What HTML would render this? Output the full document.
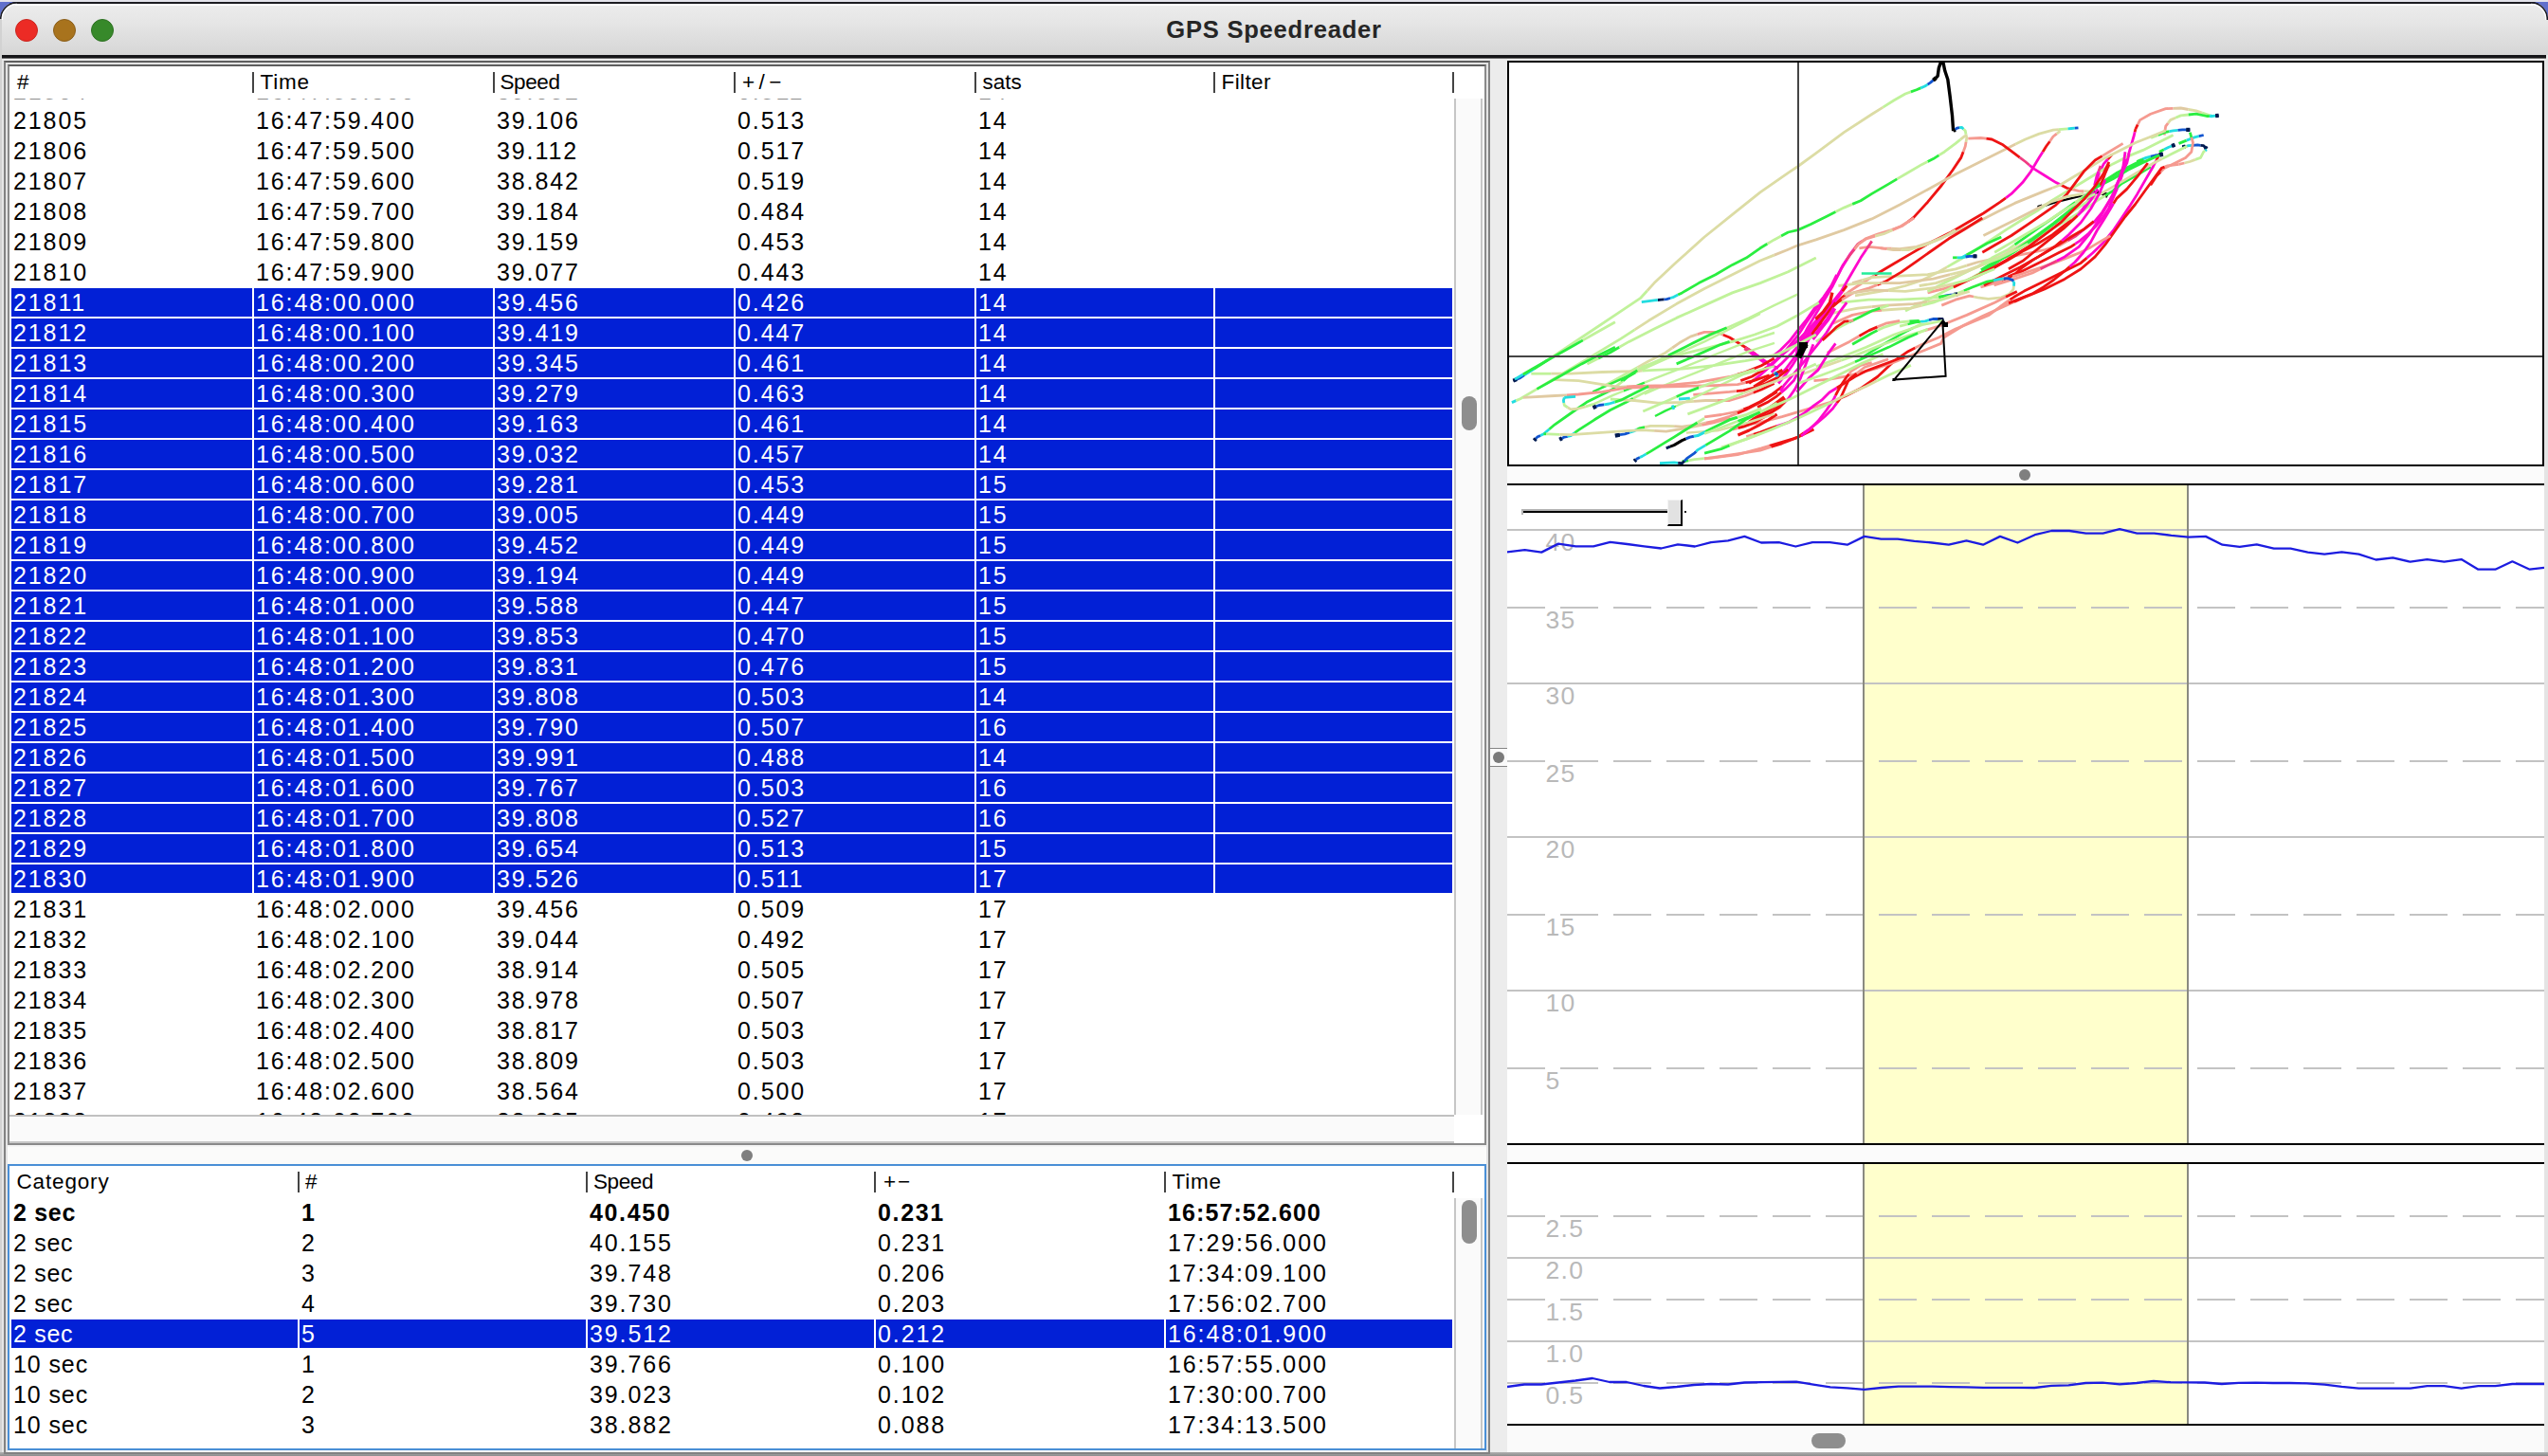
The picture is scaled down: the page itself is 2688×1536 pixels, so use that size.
<!DOCTYPE html><html><head><meta charset="utf-8"><title>GPS Speedreader</title><style>
*{box-sizing:border-box;margin:0;padding:0}
html,body{width:2688px;height:1536px;overflow:hidden;background:#ececec;font-family:"Liberation Sans",sans-serif;}
.a{position:absolute}
#tb{left:0;top:4px;width:2688px;height:54px;background:linear-gradient(#ececec 0%,#e6e6e6 35%,#d6d6d6 100%);}
.tl{position:absolute;top:20px;width:24px;height:24px;border-radius:50%;}
#title{position:absolute;left:0;width:2688px;top:15px;text-align:center;font-weight:bold;font-size:25.6px;line-height:32px;color:#262626;letter-spacing:0.75px}
.cell{position:absolute;height:30px;line-height:30px;font-size:25px;letter-spacing:1.9px;white-space:pre;color:#000;top:0}
.row{position:absolute;left:12px;width:1520px;height:30px}
.row.s{background:#0220d6}
.row.s .cell{color:#fff}
.row.b .cell{font-weight:bold;letter-spacing:1.65px}
.row.b .cell.k0{letter-spacing:0.7px}
.row.b .cell.k4{letter-spacing:1.1px}
.cell.t2{letter-spacing:0.7px}
.cell.t10{letter-spacing:0.9px}
.vs{position:absolute;width:2px;background:#fff}
.hd{position:absolute;height:34px;line-height:34px;font-size:22.5px;white-space:pre;color:#000}
.hs{position:absolute;width:2px;height:22px;background:#444}
.lab{position:absolute;font-size:26.5px;line-height:26px;letter-spacing:1.3px;color:#b9b9b9;white-space:pre}
</style></head><body>
<div class="a" style="left:0;top:0;width:2688px;height:2px;background:#e3e3eb"></div>
<div class="a" style="left:0;top:2px;width:2688px;height:2px;background:#1b1b20"></div>
<div class="a" id="tb"></div>
<div class="a" style="left:16px;top:4px;width:2656px;height:1.5px;background:#fff"></div>
<svg class="a" style="left:0;top:0" width="24" height="24"><path d="M0 2H18A18 18 0 0 0 0 20Z" fill="#6070cc"/><path d="M0.8 21A17.2 17.2 0 0 1 18 2.9" fill="none" stroke="#1b1b24" stroke-width="1.7"/><path d="M2.4 21A15.6 15.6 0 0 1 18 4.5" fill="none" stroke="#fff" stroke-width="1.3"/></svg>
<svg class="a" style="left:2664px;top:0" width="24" height="24"><path d="M24 2H6A18 18 0 0 1 24 20Z" fill="#6070cc"/><path d="M23.2 21A17.2 17.2 0 0 0 6 2.9" fill="none" stroke="#1b1b24" stroke-width="1.7"/><path d="M21.6 21A15.6 15.6 0 0 0 6 4.5" fill="none" stroke="#fff" stroke-width="1.3"/></svg>
<div class="tl" style="left:16px;background:#ec2b25;border:1.5px solid #c9261f"></div>
<div class="tl" style="left:56px;background:#a8731d;border:1.5px solid #8a5e1a"></div>
<div class="tl" style="left:96px;background:#37892a;border:1.5px solid #2d7022"></div>
<div id="title">GPS Speedreader</div>
<div class="a" style="left:2px;top:58px;width:2684px;height:3px;background:#151518"></div>
<div class="a" style="left:2px;top:61px;width:2684px;height:1px;background:#6a6a6a"></div>
<div class="a" style="left:0;top:62px;width:2688px;height:1474px;background:#ececec"></div>
<div class="a" style="left:0;top:20px;width:2px;height:1516px;background:#d2d2d2"></div>
<div class="a" style="left:2px;top:62px;width:2px;height:1474px;background:#e6e6e6"></div>
<div class="a" style="left:2684px;top:62px;width:4px;height:1474px;background:#e4e4e4"></div>
<div class="a" style="left:0;top:1532px;width:2688px;height:4px;background:linear-gradient(#b0b0b0,#8c8c8c)"></div>
<div class="a" style="left:4px;top:64px;width:1568px;height:1470px;border:2px solid #828282;border-top-color:#5e5e5e;background:#f4f4f4"></div>
<div class="a" style="left:6px;top:66px;width:1564px;height:1466px;border:2px solid #e4e4e4;border-bottom:none"></div>
<div class="a" style="left:8px;top:68px;width:1560px;height:1140px;border:2px solid #8a8a8a;border-top-color:#5e5e5e;background:#fff"></div>
<div class="hd" style="left:18px;top:70px;letter-spacing:1.0px">#</div>
<div class="hd" style="left:274.5px;top:70px;letter-spacing:0.75px">Time</div>
<div class="hd" style="left:527.5px;top:70px;letter-spacing:-0.4px">Speed</div>
<div class="hd" style="left:783px;top:70px;letter-spacing:4.4px">+/−</div>
<div class="hd" style="left:1036.5px;top:70px;letter-spacing:0px">sats</div>
<div class="hd" style="left:1288.5px;top:70px;letter-spacing:0.4px">Filter</div>
<div class="hs" style="left:266px;top:76px"></div>
<div class="hs" style="left:520px;top:76px"></div>
<div class="hs" style="left:774px;top:76px"></div>
<div class="hs" style="left:1028px;top:76px"></div>
<div class="hs" style="left:1280px;top:76px"></div>
<div class="hs" style="left:1532px;top:76px"></div>
<div class="a" style="left:0;top:104px;width:1534px;height:1072px;overflow:hidden">
<div class="row" style="top:-23px;opacity:.45">
<div class="cell" style="left:2px">21804</div>
<div class="cell" style="left:258px">16:47:59.300</div>
<div class="cell" style="left:512px">39.082</div>
<div class="cell" style="left:766px">0.511</div>
<div class="cell" style="left:1020px">14</div>
</div>
<div class="row" style="top:8px">
<div class="cell" style="left:2px">21805</div>
<div class="cell" style="left:258px">16:47:59.400</div>
<div class="cell" style="left:512px">39.106</div>
<div class="cell" style="left:766px">0.513</div>
<div class="cell" style="left:1020px">14</div>
</div>
<div class="row" style="top:40px">
<div class="cell" style="left:2px">21806</div>
<div class="cell" style="left:258px">16:47:59.500</div>
<div class="cell" style="left:512px">39.112</div>
<div class="cell" style="left:766px">0.517</div>
<div class="cell" style="left:1020px">14</div>
</div>
<div class="row" style="top:72px">
<div class="cell" style="left:2px">21807</div>
<div class="cell" style="left:258px">16:47:59.600</div>
<div class="cell" style="left:512px">38.842</div>
<div class="cell" style="left:766px">0.519</div>
<div class="cell" style="left:1020px">14</div>
</div>
<div class="row" style="top:104px">
<div class="cell" style="left:2px">21808</div>
<div class="cell" style="left:258px">16:47:59.700</div>
<div class="cell" style="left:512px">39.184</div>
<div class="cell" style="left:766px">0.484</div>
<div class="cell" style="left:1020px">14</div>
</div>
<div class="row" style="top:136px">
<div class="cell" style="left:2px">21809</div>
<div class="cell" style="left:258px">16:47:59.800</div>
<div class="cell" style="left:512px">39.159</div>
<div class="cell" style="left:766px">0.453</div>
<div class="cell" style="left:1020px">14</div>
</div>
<div class="row" style="top:168px">
<div class="cell" style="left:2px">21810</div>
<div class="cell" style="left:258px">16:47:59.900</div>
<div class="cell" style="left:512px">39.077</div>
<div class="cell" style="left:766px">0.443</div>
<div class="cell" style="left:1020px">14</div>
</div>
<div class="row s" style="top:200px">
<div class="cell" style="left:2px">21811</div>
<div class="cell" style="left:258px">16:48:00.000</div>
<div class="cell" style="left:512px">39.456</div>
<div class="cell" style="left:766px">0.426</div>
<div class="cell" style="left:1020px">14</div>
<div class="vs" style="left:254px;top:0;height:32px"></div>
<div class="vs" style="left:508px;top:0;height:32px"></div>
<div class="vs" style="left:762px;top:0;height:32px"></div>
<div class="vs" style="left:1016px;top:0;height:32px"></div>
<div class="vs" style="left:1268px;top:0;height:32px"></div>
</div>
<div class="row s" style="top:232px">
<div class="cell" style="left:2px">21812</div>
<div class="cell" style="left:258px">16:48:00.100</div>
<div class="cell" style="left:512px">39.419</div>
<div class="cell" style="left:766px">0.447</div>
<div class="cell" style="left:1020px">14</div>
<div class="vs" style="left:254px;top:0;height:32px"></div>
<div class="vs" style="left:508px;top:0;height:32px"></div>
<div class="vs" style="left:762px;top:0;height:32px"></div>
<div class="vs" style="left:1016px;top:0;height:32px"></div>
<div class="vs" style="left:1268px;top:0;height:32px"></div>
</div>
<div class="row s" style="top:264px">
<div class="cell" style="left:2px">21813</div>
<div class="cell" style="left:258px">16:48:00.200</div>
<div class="cell" style="left:512px">39.345</div>
<div class="cell" style="left:766px">0.461</div>
<div class="cell" style="left:1020px">14</div>
<div class="vs" style="left:254px;top:0;height:32px"></div>
<div class="vs" style="left:508px;top:0;height:32px"></div>
<div class="vs" style="left:762px;top:0;height:32px"></div>
<div class="vs" style="left:1016px;top:0;height:32px"></div>
<div class="vs" style="left:1268px;top:0;height:32px"></div>
</div>
<div class="row s" style="top:296px">
<div class="cell" style="left:2px">21814</div>
<div class="cell" style="left:258px">16:48:00.300</div>
<div class="cell" style="left:512px">39.279</div>
<div class="cell" style="left:766px">0.463</div>
<div class="cell" style="left:1020px">14</div>
<div class="vs" style="left:254px;top:0;height:32px"></div>
<div class="vs" style="left:508px;top:0;height:32px"></div>
<div class="vs" style="left:762px;top:0;height:32px"></div>
<div class="vs" style="left:1016px;top:0;height:32px"></div>
<div class="vs" style="left:1268px;top:0;height:32px"></div>
</div>
<div class="row s" style="top:328px">
<div class="cell" style="left:2px">21815</div>
<div class="cell" style="left:258px">16:48:00.400</div>
<div class="cell" style="left:512px">39.163</div>
<div class="cell" style="left:766px">0.461</div>
<div class="cell" style="left:1020px">14</div>
<div class="vs" style="left:254px;top:0;height:32px"></div>
<div class="vs" style="left:508px;top:0;height:32px"></div>
<div class="vs" style="left:762px;top:0;height:32px"></div>
<div class="vs" style="left:1016px;top:0;height:32px"></div>
<div class="vs" style="left:1268px;top:0;height:32px"></div>
</div>
<div class="row s" style="top:360px">
<div class="cell" style="left:2px">21816</div>
<div class="cell" style="left:258px">16:48:00.500</div>
<div class="cell" style="left:512px">39.032</div>
<div class="cell" style="left:766px">0.457</div>
<div class="cell" style="left:1020px">14</div>
<div class="vs" style="left:254px;top:0;height:32px"></div>
<div class="vs" style="left:508px;top:0;height:32px"></div>
<div class="vs" style="left:762px;top:0;height:32px"></div>
<div class="vs" style="left:1016px;top:0;height:32px"></div>
<div class="vs" style="left:1268px;top:0;height:32px"></div>
</div>
<div class="row s" style="top:392px">
<div class="cell" style="left:2px">21817</div>
<div class="cell" style="left:258px">16:48:00.600</div>
<div class="cell" style="left:512px">39.281</div>
<div class="cell" style="left:766px">0.453</div>
<div class="cell" style="left:1020px">15</div>
<div class="vs" style="left:254px;top:0;height:32px"></div>
<div class="vs" style="left:508px;top:0;height:32px"></div>
<div class="vs" style="left:762px;top:0;height:32px"></div>
<div class="vs" style="left:1016px;top:0;height:32px"></div>
<div class="vs" style="left:1268px;top:0;height:32px"></div>
</div>
<div class="row s" style="top:424px">
<div class="cell" style="left:2px">21818</div>
<div class="cell" style="left:258px">16:48:00.700</div>
<div class="cell" style="left:512px">39.005</div>
<div class="cell" style="left:766px">0.449</div>
<div class="cell" style="left:1020px">15</div>
<div class="vs" style="left:254px;top:0;height:32px"></div>
<div class="vs" style="left:508px;top:0;height:32px"></div>
<div class="vs" style="left:762px;top:0;height:32px"></div>
<div class="vs" style="left:1016px;top:0;height:32px"></div>
<div class="vs" style="left:1268px;top:0;height:32px"></div>
</div>
<div class="row s" style="top:456px">
<div class="cell" style="left:2px">21819</div>
<div class="cell" style="left:258px">16:48:00.800</div>
<div class="cell" style="left:512px">39.452</div>
<div class="cell" style="left:766px">0.449</div>
<div class="cell" style="left:1020px">15</div>
<div class="vs" style="left:254px;top:0;height:32px"></div>
<div class="vs" style="left:508px;top:0;height:32px"></div>
<div class="vs" style="left:762px;top:0;height:32px"></div>
<div class="vs" style="left:1016px;top:0;height:32px"></div>
<div class="vs" style="left:1268px;top:0;height:32px"></div>
</div>
<div class="row s" style="top:488px">
<div class="cell" style="left:2px">21820</div>
<div class="cell" style="left:258px">16:48:00.900</div>
<div class="cell" style="left:512px">39.194</div>
<div class="cell" style="left:766px">0.449</div>
<div class="cell" style="left:1020px">15</div>
<div class="vs" style="left:254px;top:0;height:32px"></div>
<div class="vs" style="left:508px;top:0;height:32px"></div>
<div class="vs" style="left:762px;top:0;height:32px"></div>
<div class="vs" style="left:1016px;top:0;height:32px"></div>
<div class="vs" style="left:1268px;top:0;height:32px"></div>
</div>
<div class="row s" style="top:520px">
<div class="cell" style="left:2px">21821</div>
<div class="cell" style="left:258px">16:48:01.000</div>
<div class="cell" style="left:512px">39.588</div>
<div class="cell" style="left:766px">0.447</div>
<div class="cell" style="left:1020px">15</div>
<div class="vs" style="left:254px;top:0;height:32px"></div>
<div class="vs" style="left:508px;top:0;height:32px"></div>
<div class="vs" style="left:762px;top:0;height:32px"></div>
<div class="vs" style="left:1016px;top:0;height:32px"></div>
<div class="vs" style="left:1268px;top:0;height:32px"></div>
</div>
<div class="row s" style="top:552px">
<div class="cell" style="left:2px">21822</div>
<div class="cell" style="left:258px">16:48:01.100</div>
<div class="cell" style="left:512px">39.853</div>
<div class="cell" style="left:766px">0.470</div>
<div class="cell" style="left:1020px">15</div>
<div class="vs" style="left:254px;top:0;height:32px"></div>
<div class="vs" style="left:508px;top:0;height:32px"></div>
<div class="vs" style="left:762px;top:0;height:32px"></div>
<div class="vs" style="left:1016px;top:0;height:32px"></div>
<div class="vs" style="left:1268px;top:0;height:32px"></div>
</div>
<div class="row s" style="top:584px">
<div class="cell" style="left:2px">21823</div>
<div class="cell" style="left:258px">16:48:01.200</div>
<div class="cell" style="left:512px">39.831</div>
<div class="cell" style="left:766px">0.476</div>
<div class="cell" style="left:1020px">15</div>
<div class="vs" style="left:254px;top:0;height:32px"></div>
<div class="vs" style="left:508px;top:0;height:32px"></div>
<div class="vs" style="left:762px;top:0;height:32px"></div>
<div class="vs" style="left:1016px;top:0;height:32px"></div>
<div class="vs" style="left:1268px;top:0;height:32px"></div>
</div>
<div class="row s" style="top:616px">
<div class="cell" style="left:2px">21824</div>
<div class="cell" style="left:258px">16:48:01.300</div>
<div class="cell" style="left:512px">39.808</div>
<div class="cell" style="left:766px">0.503</div>
<div class="cell" style="left:1020px">14</div>
<div class="vs" style="left:254px;top:0;height:32px"></div>
<div class="vs" style="left:508px;top:0;height:32px"></div>
<div class="vs" style="left:762px;top:0;height:32px"></div>
<div class="vs" style="left:1016px;top:0;height:32px"></div>
<div class="vs" style="left:1268px;top:0;height:32px"></div>
</div>
<div class="row s" style="top:648px">
<div class="cell" style="left:2px">21825</div>
<div class="cell" style="left:258px">16:48:01.400</div>
<div class="cell" style="left:512px">39.790</div>
<div class="cell" style="left:766px">0.507</div>
<div class="cell" style="left:1020px">16</div>
<div class="vs" style="left:254px;top:0;height:32px"></div>
<div class="vs" style="left:508px;top:0;height:32px"></div>
<div class="vs" style="left:762px;top:0;height:32px"></div>
<div class="vs" style="left:1016px;top:0;height:32px"></div>
<div class="vs" style="left:1268px;top:0;height:32px"></div>
</div>
<div class="row s" style="top:680px">
<div class="cell" style="left:2px">21826</div>
<div class="cell" style="left:258px">16:48:01.500</div>
<div class="cell" style="left:512px">39.991</div>
<div class="cell" style="left:766px">0.488</div>
<div class="cell" style="left:1020px">14</div>
<div class="vs" style="left:254px;top:0;height:32px"></div>
<div class="vs" style="left:508px;top:0;height:32px"></div>
<div class="vs" style="left:762px;top:0;height:32px"></div>
<div class="vs" style="left:1016px;top:0;height:32px"></div>
<div class="vs" style="left:1268px;top:0;height:32px"></div>
</div>
<div class="row s" style="top:712px">
<div class="cell" style="left:2px">21827</div>
<div class="cell" style="left:258px">16:48:01.600</div>
<div class="cell" style="left:512px">39.767</div>
<div class="cell" style="left:766px">0.503</div>
<div class="cell" style="left:1020px">16</div>
<div class="vs" style="left:254px;top:0;height:32px"></div>
<div class="vs" style="left:508px;top:0;height:32px"></div>
<div class="vs" style="left:762px;top:0;height:32px"></div>
<div class="vs" style="left:1016px;top:0;height:32px"></div>
<div class="vs" style="left:1268px;top:0;height:32px"></div>
</div>
<div class="row s" style="top:744px">
<div class="cell" style="left:2px">21828</div>
<div class="cell" style="left:258px">16:48:01.700</div>
<div class="cell" style="left:512px">39.808</div>
<div class="cell" style="left:766px">0.527</div>
<div class="cell" style="left:1020px">16</div>
<div class="vs" style="left:254px;top:0;height:32px"></div>
<div class="vs" style="left:508px;top:0;height:32px"></div>
<div class="vs" style="left:762px;top:0;height:32px"></div>
<div class="vs" style="left:1016px;top:0;height:32px"></div>
<div class="vs" style="left:1268px;top:0;height:32px"></div>
</div>
<div class="row s" style="top:776px">
<div class="cell" style="left:2px">21829</div>
<div class="cell" style="left:258px">16:48:01.800</div>
<div class="cell" style="left:512px">39.654</div>
<div class="cell" style="left:766px">0.513</div>
<div class="cell" style="left:1020px">15</div>
<div class="vs" style="left:254px;top:0;height:32px"></div>
<div class="vs" style="left:508px;top:0;height:32px"></div>
<div class="vs" style="left:762px;top:0;height:32px"></div>
<div class="vs" style="left:1016px;top:0;height:32px"></div>
<div class="vs" style="left:1268px;top:0;height:32px"></div>
</div>
<div class="row s" style="top:808px">
<div class="cell" style="left:2px">21830</div>
<div class="cell" style="left:258px">16:48:01.900</div>
<div class="cell" style="left:512px">39.526</div>
<div class="cell" style="left:766px">0.511</div>
<div class="cell" style="left:1020px">17</div>
<div class="vs" style="left:254px;top:0;height:32px"></div>
<div class="vs" style="left:508px;top:0;height:32px"></div>
<div class="vs" style="left:762px;top:0;height:32px"></div>
<div class="vs" style="left:1016px;top:0;height:32px"></div>
<div class="vs" style="left:1268px;top:0;height:32px"></div>
</div>
<div class="row" style="top:840px">
<div class="cell" style="left:2px">21831</div>
<div class="cell" style="left:258px">16:48:02.000</div>
<div class="cell" style="left:512px">39.456</div>
<div class="cell" style="left:766px">0.509</div>
<div class="cell" style="left:1020px">17</div>
</div>
<div class="row" style="top:872px">
<div class="cell" style="left:2px">21832</div>
<div class="cell" style="left:258px">16:48:02.100</div>
<div class="cell" style="left:512px">39.044</div>
<div class="cell" style="left:766px">0.492</div>
<div class="cell" style="left:1020px">17</div>
</div>
<div class="row" style="top:904px">
<div class="cell" style="left:2px">21833</div>
<div class="cell" style="left:258px">16:48:02.200</div>
<div class="cell" style="left:512px">38.914</div>
<div class="cell" style="left:766px">0.505</div>
<div class="cell" style="left:1020px">17</div>
</div>
<div class="row" style="top:936px">
<div class="cell" style="left:2px">21834</div>
<div class="cell" style="left:258px">16:48:02.300</div>
<div class="cell" style="left:512px">38.978</div>
<div class="cell" style="left:766px">0.507</div>
<div class="cell" style="left:1020px">17</div>
</div>
<div class="row" style="top:968px">
<div class="cell" style="left:2px">21835</div>
<div class="cell" style="left:258px">16:48:02.400</div>
<div class="cell" style="left:512px">38.817</div>
<div class="cell" style="left:766px">0.503</div>
<div class="cell" style="left:1020px">17</div>
</div>
<div class="row" style="top:1000px">
<div class="cell" style="left:2px">21836</div>
<div class="cell" style="left:258px">16:48:02.500</div>
<div class="cell" style="left:512px">38.809</div>
<div class="cell" style="left:766px">0.503</div>
<div class="cell" style="left:1020px">17</div>
</div>
<div class="row" style="top:1032px">
<div class="cell" style="left:2px">21837</div>
<div class="cell" style="left:258px">16:48:02.600</div>
<div class="cell" style="left:512px">38.564</div>
<div class="cell" style="left:766px">0.500</div>
<div class="cell" style="left:1020px">17</div>
</div>
<div class="row" style="top:1064px">
<div class="cell" style="left:2px">21838</div>
<div class="cell" style="left:258px">16:48:02.700</div>
<div class="cell" style="left:512px">38.385</div>
<div class="cell" style="left:766px">0.498</div>
<div class="cell" style="left:1020px">17</div>
</div>
</div>
<div class="a" style="left:1534px;top:104px;width:30px;height:1072px;background:#fafafa;border-left:2px solid #c6c6c6;border-right:2px solid #c6c6c6"></div>
<div class="a" style="left:1542px;top:418px;width:16px;height:36px;border-radius:8px;background:#8e8e8e"></div>
<div class="a" style="left:10px;top:1176px;width:1524px;height:30px;background:#fafafa;border-top:2px solid #c0c0c0;border-bottom:2px solid #c6c6c6"></div>
<div class="a" style="left:8px;top:1210px;width:1560px;height:18px;background:#fbfbfa"></div>
<div class="a" style="left:782px;top:1213px;width:12px;height:12px;border-radius:50%;background:#7f7f7f"></div>
<div class="a" style="left:8px;top:1228px;width:1560px;height:302px;border:2px solid #4a8fd6;background:#fff"></div>
<div class="hd" style="left:17.5px;top:1230px;letter-spacing:0.84px">Category</div>
<div class="hd" style="left:322px;top:1230px;letter-spacing:0px">#</div>
<div class="hd" style="left:626px;top:1230px;letter-spacing:-0.4px">Speed</div>
<div class="hd" style="left:932px;top:1230px;letter-spacing:1.8px">+−</div>
<div class="hd" style="left:1236.5px;top:1230px;letter-spacing:0.75px">Time</div>
<div class="hs" style="left:314px;top:1236px"></div>
<div class="hs" style="left:618px;top:1236px"></div>
<div class="hs" style="left:922px;top:1236px"></div>
<div class="hs" style="left:1228px;top:1236px"></div>
<div class="hs" style="left:1532px;top:1236px"></div>
<div class="a" style="left:0;top:1264px;width:1534px;height:264px;overflow:hidden">
<div class="row b" style="top:0px">
<div class="cell k0 t2" style="left:2px">2 sec</div>
<div class="cell k1" style="left:306px">1</div>
<div class="cell k2" style="left:610px">40.450</div>
<div class="cell k3" style="left:914px">0.231</div>
<div class="cell k4" style="left:1220px">16:57:52.600</div>
</div>
<div class="row" style="top:32px">
<div class="cell k0 t2" style="left:2px">2 sec</div>
<div class="cell k1" style="left:306px">2</div>
<div class="cell k2" style="left:610px">40.155</div>
<div class="cell k3" style="left:914px">0.231</div>
<div class="cell k4" style="left:1220px">17:29:56.000</div>
</div>
<div class="row" style="top:64px">
<div class="cell k0 t2" style="left:2px">2 sec</div>
<div class="cell k1" style="left:306px">3</div>
<div class="cell k2" style="left:610px">39.748</div>
<div class="cell k3" style="left:914px">0.206</div>
<div class="cell k4" style="left:1220px">17:34:09.100</div>
</div>
<div class="row" style="top:96px">
<div class="cell k0 t2" style="left:2px">2 sec</div>
<div class="cell k1" style="left:306px">4</div>
<div class="cell k2" style="left:610px">39.730</div>
<div class="cell k3" style="left:914px">0.203</div>
<div class="cell k4" style="left:1220px">17:56:02.700</div>
</div>
<div class="row s" style="top:128px">
<div class="cell k0 t2" style="left:2px">2 sec</div>
<div class="cell k1" style="left:306px">5</div>
<div class="cell k2" style="left:610px">39.512</div>
<div class="cell k3" style="left:914px">0.212</div>
<div class="cell k4" style="left:1220px">16:48:01.900</div>
<div class="vs" style="left:302px;top:0;height:32px"></div>
<div class="vs" style="left:606px;top:0;height:32px"></div>
<div class="vs" style="left:910px;top:0;height:32px"></div>
<div class="vs" style="left:1216px;top:0;height:32px"></div>
</div>
<div class="row" style="top:160px">
<div class="cell k0 t10" style="left:2px">10 sec</div>
<div class="cell k1" style="left:306px">1</div>
<div class="cell k2" style="left:610px">39.766</div>
<div class="cell k3" style="left:914px">0.100</div>
<div class="cell k4" style="left:1220px">16:57:55.000</div>
</div>
<div class="row" style="top:192px">
<div class="cell k0 t10" style="left:2px">10 sec</div>
<div class="cell k1" style="left:306px">2</div>
<div class="cell k2" style="left:610px">39.023</div>
<div class="cell k3" style="left:914px">0.102</div>
<div class="cell k4" style="left:1220px">17:30:00.700</div>
</div>
<div class="row" style="top:224px">
<div class="cell k0 t10" style="left:2px">10 sec</div>
<div class="cell k1" style="left:306px">3</div>
<div class="cell k2" style="left:610px">38.882</div>
<div class="cell k3" style="left:914px">0.088</div>
<div class="cell k4" style="left:1220px">17:34:13.500</div>
</div>
</div>
<div class="a" style="left:1534px;top:1264px;width:30px;height:264px;background:#fafafa;border-left:2px solid #c6c6c6;border-right:2px solid #c6c6c6"></div>
<div class="a" style="left:1542px;top:1266px;width:16px;height:46px;border-radius:8px;background:#8e8e8e"></div>
<div class="a" style="left:1572px;top:789px;width:18px;height:20px;background:#fafafa;border-top:1.5px solid #858585;border-bottom:1.5px solid #858585"></div>
<div class="a" style="left:1575px;top:793px;width:12px;height:12px;border-radius:50%;background:#7a7a7a"></div>
<div class="a" style="left:1590px;top:64px;width:1094px;height:428px;border:2px solid #000;background:#fff"></div>
<svg class="a" style="left:1592px;top:66px" width="1090" height="424" viewBox="1592 66 1090 424" fill="none" stroke-linecap="butt" stroke-linejoin="round"><polyline points="1596.4,401.6 1600.1,400.1" stroke="#001a50" stroke-width="2.8"/><polyline points="1600.1,400.1 1603.8,398.6 1608.2,395.7" stroke="#1155d0" stroke-width="2.8"/><polyline points="1608.2,395.7 1612.6,392.8 1618.5,389.1" stroke="#22dde0" stroke-width="2.8"/><polyline points="1618.5,389.1 1624.4,385.4 1633.2,379.5" stroke="#2aee40" stroke-width="2.8"/><polyline points="1633.2,379.5 1642.0,373.6 1668.5,356.0 1703.9,332.4 1730.4,314.7 1737.7,306.7" stroke="#c0f29a" stroke-width="2.8"/><polyline points="1737.7,306.7 1745.1,298.6 1768.6,276.5 1798.1,250.0 1827.5,226.4 1856.9,202.9 1886.4,182.3 1896.7,175.5 1915.8,161.7 1945.3,139.6 1974.7,120.5 1986.5,113.1" stroke="#dcdca4" stroke-width="2.8"/><polyline points="1986.5,113.1 1998.2,105.7 2010.0,99.0 2015.9,96.9" stroke="#c0f29a" stroke-width="2.8"/><polyline points="2015.9,96.9 2021.8,94.8 2026.2,92.9" stroke="#2aee40" stroke-width="2.8"/><polyline points="2026.2,92.9 2030.6,91.0 2033.6,89.1" stroke="#22dde0" stroke-width="2.8"/><polyline points="2033.6,89.1 2036.5,87.2 2039.5,84.7" stroke="#1155d0" stroke-width="2.8"/><polyline points="2039.5,84.7 2042.4,82.2" stroke="#000000" stroke-width="2.8"/><path d="M1596.4 401.6L1600.1 400.1" stroke="#001a50" stroke-width="4.2"/><path d="M2042.4 82.2L2039.5 84.7" stroke="#000000" stroke-width="4.2"/><polyline points="2042.4,82.2 2044.2,80.1 2045.3,71.9 2047.1,66.6 2050.1,66.6 2051.8,74.8 2054.8,83.7 2057.1,101.3 2059.5,121.9 2060.6,138.1" stroke="#000000" stroke-width="3.4"/><polyline points="2060.6,138.1 2062.6,136.7" stroke="#000000" stroke-width="2.8"/><polyline points="2062.6,136.7 2064.5,135.2 2067.0,134.7" stroke="#1155d0" stroke-width="2.8"/><polyline points="2067.0,134.7 2069.5,134.3 2071.4,136.2" stroke="#22dde0" stroke-width="2.8"/><polyline points="2071.4,136.2 2073.3,138.1 2074.0,141.8" stroke="#c0f29a" stroke-width="2.8"/><polyline points="2074.0,141.8 2074.8,145.5 2074.0,149.9" stroke="#dcdca4" stroke-width="2.8"/><polyline points="2074.0,149.9 2073.3,154.3 2071.1,160.2" stroke="#f59a90" stroke-width="2.8"/><polyline points="2071.1,160.2 2068.9,166.1 2060.1,179.3 2048.3,195.5 2033.6,213.2 2018.8,229.4 2013.0,233.8" stroke="#ee1414" stroke-width="2.8"/><polyline points="2013.0,233.8 2007.1,238.2 1995.3,242.6 1980.6,247.0 1968.8,251.5 1964.4,254.4" stroke="#f59a90" stroke-width="2.8"/><polyline points="1964.4,254.4 1960.0,257.3 1955.6,263.2" stroke="#f03c82" stroke-width="2.8"/><polyline points="1955.6,263.2 1951.1,269.1 1942.3,283.8 1933.5,301.5 1924.6,316.2 1915.8,330.9 1907.0,345.7 1899.6,360.4 1895.2,372.2" stroke="#ff08cc" stroke-width="2.8"/><path d="M2060.6 138.1L2062.6 136.7" stroke="#000000" stroke-width="4.2"/><polyline points="2073.3,143.1 2068.2,147.2" stroke="#dcdca4" stroke-width="2.8"/><polyline points="2068.2,147.2 2063.0,151.4 2051.2,160.2 2045.3,163.9" stroke="#c0f29a" stroke-width="2.8"/><polyline points="2045.3,163.9 2039.5,167.6 2033.6,170.5" stroke="#2aee40" stroke-width="2.8"/><polyline points="2033.6,170.5 2027.7,173.4 2010.0,183.8 2001.2,188.9" stroke="#c0f29a" stroke-width="2.8"/><polyline points="2001.2,188.9 1992.4,194.1 1974.7,204.4 1962.9,211.7 1954.1,215.4" stroke="#2aee40" stroke-width="2.8"/><polyline points="1954.1,215.4 1945.3,219.1 1936.4,223.5" stroke="#c0f29a" stroke-width="2.8"/><polyline points="1936.4,223.5 1927.6,227.9 1909.9,236.7 1896.7,242.6 1886.4,245.0 1879.0,249.0" stroke="#2aee40" stroke-width="2.8"/><polyline points="1879.0,249.0 1871.7,252.9 1864.3,257.3" stroke="#c0f29a" stroke-width="2.8"/><polyline points="1864.3,257.3 1856.9,261.8 1842.2,272.1 1827.5,279.4 1809.8,289.7 1792.2,298.6 1774.5,308.9 1770.1,311.1" stroke="#2aee40" stroke-width="2.8"/><polyline points="1770.1,311.1 1765.7,313.3 1762.0,314.5" stroke="#22dde0" stroke-width="2.8"/><polyline points="1762.0,314.5 1758.3,315.6 1755.4,315.9" stroke="#1155d0" stroke-width="2.8"/><polyline points="1755.4,315.9 1752.4,316.2 1748.8,316.5" stroke="#001a50" stroke-width="2.8"/><polyline points="1748.8,316.5 1745.1,316.8 1731.8,318.6" stroke="#22dde0" stroke-width="2.8"/><polyline points="1594.9,424.6 1599.4,422.6" stroke="#22dde0" stroke-width="2.8"/><polyline points="1599.4,422.6 1603.8,420.7 1621.4,410.4 1650.9,392.8 1680.3,375.1 1709.8,357.4 1724.5,347.9" stroke="#c0f29a" stroke-width="2.8"/><polyline points="1724.5,347.9 1739.2,338.3 1768.6,320.6 1798.1,304.4 1827.5,289.7 1856.9,275.0 1871.7,269.1" stroke="#dcdca4" stroke-width="2.8"/><polyline points="1871.7,269.1 1886.4,263.2 1896.7,258.8 1915.8,252.9 1945.3,242.6 1974.7,230.9 2004.1,216.1 2033.6,199.9 2063.0,183.8 2092.4,169.0 2116.0,157.3 2126.3,152.1" stroke="#e0caa2" stroke-width="2.8"/><polyline points="2126.3,152.1 2136.6,147.0 2151.3,141.1 2166.0,137.2 2171.9,136.7" stroke="#dcdca4" stroke-width="2.8"/><polyline points="2171.9,136.7 2177.8,136.1 2181.5,135.8" stroke="#c0f29a" stroke-width="2.8"/><polyline points="2181.5,135.8 2185.2,135.5 2188.9,135.2" stroke="#22dde0" stroke-width="2.8"/><polyline points="2188.9,135.2 2192.5,134.9" stroke="#1155d0" stroke-width="2.8"/><polyline points="2173.4,138.1 2169.7,141.1" stroke="#dcdca4" stroke-width="2.8"/><polyline points="2169.7,141.1 2166.0,144.0 2162.4,149.2" stroke="#f59a90" stroke-width="2.8"/><polyline points="2162.4,149.2 2158.7,154.3 2155.0,160.2" stroke="#ee1414" stroke-width="2.8"/><polyline points="2155.0,160.2 2151.3,166.1 2142.5,180.8 2133.7,192.6 2121.9,204.4 2116.0,208.8" stroke="#ff08cc" stroke-width="2.8"/><polyline points="2116.0,208.8 2110.1,213.2 2092.4,225.0 2074.8,235.3 2057.1,245.6 2033.6,257.3 2015.9,267.6 1998.2,278.0 1983.5,286.8 1977.6,290.5" stroke="#ee1414" stroke-width="2.8"/><polyline points="1977.6,290.5 1971.7,294.1 1960.0,301.5 1951.1,307.4 1946.7,311.1" stroke="#f59a90" stroke-width="2.8"/><polyline points="1946.7,311.1 1942.3,314.7 1933.5,323.6 1929.1,328.0" stroke="#ee1414" stroke-width="2.8"/><polyline points="1929.1,328.0 1924.6,332.4 1915.8,342.7 1907.0,354.5 1899.6,366.3 1895.2,373.6" stroke="#ff08cc" stroke-width="2.8"/><polyline points="2076.3,146.1 2089.5,145.5 2095.4,146.2" stroke="#f59a90" stroke-width="2.8"/><polyline points="2095.4,146.2 2101.3,147.0 2113.0,152.8 2124.8,161.7 2130.7,166.1" stroke="#ee1414" stroke-width="2.8"/><polyline points="2130.7,166.1 2136.6,170.5 2141.0,174.2" stroke="#f03c82" stroke-width="2.8"/><polyline points="2141.0,174.2 2145.4,177.9 2157.2,185.2 2169.0,192.6 2174.9,195.5" stroke="#ff08cc" stroke-width="2.8"/><polyline points="2174.9,195.5 2180.8,198.5 2186.6,199.9" stroke="#ee1414" stroke-width="2.8"/><polyline points="2186.6,199.9 2192.5,201.4 2198.4,201.7" stroke="#f59a90" stroke-width="2.8"/><polyline points="2198.4,201.7 2204.3,202.0 2208.7,202.4" stroke="#dcdca4" stroke-width="2.8"/><polyline points="2208.7,202.4 2213.1,202.9 2223.4,205.8" stroke="#000000" stroke-width="2.8"/><path d="M2223.4 205.8L2218.6 204.5" stroke="#000000" stroke-width="4.2"/><polyline points="2149.8,219.1 2169.0,213.2 2192.5,207.3 2213.1,202.9 2223.4,206.7" stroke="#000000" stroke-width="2.4"/><path d="M2149.8 219.1L2154.6 217.6" stroke="#000000" stroke-width="4.2"/><path d="M2223.4 206.7L2218.8 205.0" stroke="#000000" stroke-width="4.2"/><polyline points="1689.1,408.9 1715.6,394.2 1727.4,387.6" stroke="#c0f29a" stroke-width="2.8"/><polyline points="1727.4,387.6 1739.2,381.0 1756.9,372.2 1764.2,367.0" stroke="#dcdca4" stroke-width="2.8"/><polyline points="1764.2,367.0 1771.6,361.8 1783.3,355.1 1790.7,352.7" stroke="#e0caa2" stroke-width="2.8"/><polyline points="1790.7,352.7 1798.1,350.4 1811.3,350.4 1817.9,353.2" stroke="#f59a90" stroke-width="2.8"/><polyline points="1817.9,353.2 1824.6,356.0 1836.3,363.3 1848.1,370.7 1852.5,374.1" stroke="#ee1414" stroke-width="2.8"/><polyline points="1852.5,374.1 1856.9,377.5 1867.2,385.4 1876.1,388.3" stroke="#ff08cc" stroke-width="2.8"/><polyline points="2252.9,136.1 2255.2,131.4" stroke="#ee1414" stroke-width="2.8"/><polyline points="2255.2,131.4 2257.6,126.6 2268.8,120.2 2284.7,114.6 2292.6,114.3" stroke="#f59a90" stroke-width="2.8"/><polyline points="2292.6,114.3 2300.6,114.0 2308.7,115.5" stroke="#e0caa2" stroke-width="2.8"/><polyline points="2308.7,115.5 2316.8,116.9 2323.1,119.0" stroke="#dcdca4" stroke-width="2.8"/><polyline points="2323.1,119.0 2329.4,121.0 2331.6,121.8" stroke="#c0f29a" stroke-width="2.8"/><polyline points="2331.6,121.8 2333.8,122.5 2337.2,122.2" stroke="#22dde0" stroke-width="2.8"/><polyline points="2337.2,122.2 2340.6,121.9" stroke="#001a50" stroke-width="2.8"/><path d="M2340.6 121.9L2337.2 122.2" stroke="#001a50" stroke-width="4.2"/><polyline points="2283.2,142.5 2284.7,133.1 2287.2,129.9" stroke="#f59a90" stroke-width="2.8"/><polyline points="2287.2,129.9 2289.7,126.6 2295.1,124.3" stroke="#dcdca4" stroke-width="2.8"/><polyline points="2295.1,124.3 2300.6,121.9 2308.7,121.0" stroke="#c0f29a" stroke-width="2.8"/><polyline points="2308.7,121.0 2316.8,120.2 2327.9,122.5 2330.9,122.7" stroke="#2aee40" stroke-width="2.8"/><polyline points="2330.9,122.7 2333.8,122.8" stroke="#22dde0" stroke-width="2.8"/><polyline points="2269.1,145.5 2276.9,142.4" stroke="#c0f29a" stroke-width="2.8"/><polyline points="2276.9,142.4 2284.7,139.3 2288.6,138.6" stroke="#2aee40" stroke-width="2.8"/><polyline points="2288.6,138.6 2292.6,137.8 2297.5,137.4" stroke="#22dde0" stroke-width="2.8"/><polyline points="2297.5,137.4 2302.3,136.9 2306.3,136.9" stroke="#1155d0" stroke-width="2.8"/><polyline points="2306.3,136.9 2310.3,136.9" stroke="#001a50" stroke-width="2.8"/><path d="M2310.3 136.9L2306.3 136.9" stroke="#001a50" stroke-width="4.2"/><polyline points="2298.5,151.4 2306.7,148.1" stroke="#2aee40" stroke-width="2.8"/><polyline points="2306.7,148.1 2315.0,144.9 2319.8,143.7" stroke="#22dde0" stroke-width="2.8"/><polyline points="2319.8,143.7 2324.7,142.5" stroke="#1155d0" stroke-width="2.8"/><polyline points="2277.9,160.2 2282.9,157.7" stroke="#2aee40" stroke-width="2.8"/><polyline points="2282.9,157.7 2287.9,155.2 2291.1,154.0" stroke="#22dde0" stroke-width="2.8"/><polyline points="2291.1,154.0 2294.4,152.8" stroke="#001a50" stroke-width="2.8"/><path d="M2294.4 152.8L2291.1 154.0" stroke="#001a50" stroke-width="4.2"/><polyline points="2302.3,155.2 2305.6,154.5" stroke="#001a50" stroke-width="2.8"/><polyline points="2305.6,154.5 2308.8,153.7 2313.5,153.3" stroke="#22dde0" stroke-width="2.8"/><polyline points="2313.5,153.3 2318.2,152.8 2321.5,153.3" stroke="#1155d0" stroke-width="2.8"/><polyline points="2321.5,153.3 2324.7,153.7 2327.9,157.0" stroke="#001a50" stroke-width="2.8"/><path d="M2302.3 155.2L2305.6 154.5" stroke="#001a50" stroke-width="4.2"/><path d="M2327.9 157.0L2326.3 155.3" stroke="#001a50" stroke-width="4.2"/><polyline points="2254.3,170.5 2259.2,168.4" stroke="#2aee40" stroke-width="2.8"/><polyline points="2259.2,168.4 2264.1,166.4 2268.8,165.2" stroke="#22dde0" stroke-width="2.8"/><polyline points="2268.8,165.2 2273.5,164.0 2277.6,163.3" stroke="#1155d0" stroke-width="2.8"/><polyline points="2277.6,163.3 2281.7,162.6" stroke="#001a50" stroke-width="2.8"/><path d="M2281.7 162.6L2277.6 163.3" stroke="#001a50" stroke-width="4.2"/><polyline points="2310.3,139.6 2311.9,145.0" stroke="#2aee40" stroke-width="2.8"/><polyline points="2311.9,145.0 2313.5,150.5 2311.8,160.2 2305.6,166.4 2292.6,172.9 2283.2,177.6 2279.2,181.5" stroke="#f59a90" stroke-width="2.8"/><polyline points="2279.2,181.5 2275.2,185.5 2268.8,195.2" stroke="#ee1414" stroke-width="2.8"/><polyline points="2327.9,157.8 2326.3,159.0" stroke="#22dde0" stroke-width="2.8"/><polyline points="2326.3,159.0 2324.7,160.2 2321.5,166.4 2315.9,168.4" stroke="#c0f29a" stroke-width="2.8"/><polyline points="2315.9,168.4 2310.3,170.5 2304.4,172.0" stroke="#dcdca4" stroke-width="2.8"/><polyline points="2304.4,172.0 2298.5,173.4" stroke="#f59a90" stroke-width="2.8"/><polyline points="2252.9,136.1 2252.1,139.3" stroke="#ee1414" stroke-width="2.8"/><polyline points="2252.1,139.3 2251.4,142.5 2248.2,153.7 2244.9,164.9 2240.2,176.1 2237.0,185.5 2232.3,198.5 2225.8,211.1 2217.8,223.8 2209.9,233.5 2197.2,242.9 2193.3,246.2" stroke="#ff08cc" stroke-width="2.8"/><polyline points="2193.3,246.2 2189.3,249.4 2181.2,254.1" stroke="#f03c82" stroke-width="2.8"/><polyline points="2181.2,254.1 2173.1,258.8 2157.2,263.5 2141.3,266.8 2125.4,270.0 2116.3,271.0" stroke="#f59a90" stroke-width="2.8"/><polyline points="2116.3,271.0 2107.2,272.1 2086.6,276.5 2074.8,280.2" stroke="#e0caa2" stroke-width="2.8"/><polyline points="2074.8,280.2 2063.0,283.8 2033.6,289.7 2004.1,291.2 1974.7,292.7 1964.4,295.6" stroke="#dcdca4" stroke-width="2.8"/><polyline points="1964.4,295.6 1954.1,298.6" stroke="#e0caa2" stroke-width="2.8"/><polyline points="2227.9,163.1 2223.6,168.0" stroke="#ee1414" stroke-width="2.8"/><polyline points="2223.6,168.0 2219.3,172.9 2214.6,182.3 2211.4,192.0 2208.4,201.4 2203.4,211.1 2197.2,220.5 2189.3,228.5 2185.3,231.7" stroke="#ff08cc" stroke-width="2.8"/><polyline points="2185.3,231.7 2181.3,235.0 2173.1,241.4 2165.2,247.6 2149.3,257.3 2133.4,265.3 2117.5,274.7 2101.3,283.8 2093.9,287.5" stroke="#ee1414" stroke-width="2.8"/><polyline points="2093.9,287.5 2086.6,291.2 2068.9,298.6 2051.2,304.4 2033.6,308.9" stroke="#f59a90" stroke-width="2.8"/><polyline points="2242.6,172.0 2238.5,185.5 2233.7,198.5 2229.0,209.4 2224.3,220.5 2217.8,230.3 2211.4,238.2 2203.4,246.2 2194.0,254.1 2189.1,257.3" stroke="#ff08cc" stroke-width="2.8"/><polyline points="2189.1,257.3 2184.3,260.6 2171.6,266.8 2159.0,273.2 2146.0,279.7 2133.4,285.9 2118.9,292.7 2111.6,295.6" stroke="#ee1414" stroke-width="2.8"/><polyline points="2111.6,295.6 2104.2,298.6 2089.5,303.0" stroke="#f59a90" stroke-width="2.8"/><polyline points="2277.9,163.1 2274.8,169.2" stroke="#ee1414" stroke-width="2.8"/><polyline points="2274.8,169.2 2271.7,175.2 2263.2,189.9 2254.6,204.9 2246.4,217.9 2237.9,230.6 2229.3,243.2 2218.7,256.2 2207.8,266.8 2201.5,272.1" stroke="#ff08cc" stroke-width="2.8"/><polyline points="2201.5,272.1 2195.2,277.4 2178.1,285.9 2156.9,296.5 2135.4,307.1 2124.8,313.3 2120.4,316.2" stroke="#ee1414" stroke-width="2.8"/><polyline points="2120.4,316.2 2116.0,319.2 2098.3,332.4 2080.7,339.8 2063.0,347.1 2045.3,356.0 2027.7,363.3 2020.3,367.0" stroke="#f59a90" stroke-width="2.8"/><polyline points="2020.3,367.0 2013.0,370.7 1998.2,381.0 1980.6,397.5 1963.8,409.2 1947.0,417.8 1938.6,421.2" stroke="#ee1414" stroke-width="2.8"/><polyline points="1938.6,421.2 1930.2,424.6 1913.5,429.6 1896.7,434.6 1879.9,439.6 1856.9,445.7 1833.4,450.2" stroke="#f59a90" stroke-width="2.8"/><polyline points="2298.5,173.4 2286.7,174.9 2283.5,176.1" stroke="#f59a90" stroke-width="2.8"/><polyline points="2283.5,176.1 2280.3,177.3 2274.1,185.8 2263.2,200.8 2252.6,215.5 2242.0,228.5 2231.4,243.2 2220.8,258.2 2210.2,270.9 2195.2,283.8 2178.1,294.4 2156.9,305.0 2135.4,313.6 2124.8,318.4" stroke="#ee1414" stroke-width="2.8"/><polyline points="2124.8,318.4 2114.2,323.3 2093.0,332.7 2071.5,343.3 2050.3,356.3 2047.7,362.4 2030.9,369.2 2014.1,375.7 1997.4,382.5 1980.6,388.3 1963.8,392.8 1947.0,397.2 1930.2,400.1 1913.5,401.6" stroke="#f59a90" stroke-width="2.8"/><polyline points="2281.7,162.6 2278.5,163.7" stroke="#001a50" stroke-width="2.8"/><polyline points="2278.5,163.7 2275.2,164.9 2260.8,171.4 2244.9,179.3 2229.0,188.8 2213.1,196.7 2205.2,202.3" stroke="#2aee40" stroke-width="2.8"/><polyline points="2205.2,202.3 2197.2,207.9 2189.3,213.5" stroke="#c0f29a" stroke-width="2.8"/><polyline points="2189.3,213.5 2181.3,219.1 2165.2,230.3 2149.3,241.4 2133.4,252.6 2125.4,258.2" stroke="#2aee40" stroke-width="2.8"/><polyline points="2125.4,258.2 2117.5,263.8 2101.3,272.1 2086.6,280.9 2068.9,289.7 2051.2,298.6 2033.6,307.4" stroke="#c0f29a" stroke-width="2.8"/><path d="M2281.7 162.6L2278.5 163.7" stroke="#001a50" stroke-width="4.2"/><polyline points="2268.8,176.1 2252.9,185.5 2238.5,193.5 2229.0,201.4 2221.1,206.3" stroke="#2aee40" stroke-width="2.8"/><polyline points="2221.1,206.3 2213.1,211.1 2197.2,222.3 2181.3,231.7 2165.2,241.4 2149.3,250.9 2130.7,261.8 2121.9,266.9" stroke="#c0f29a" stroke-width="2.8"/><polyline points="2121.9,266.9 2113.0,272.1 2096.3,283.8 2088.5,288.3" stroke="#2aee40" stroke-width="2.8"/><polyline points="2088.5,288.3 2080.7,292.7 2063.0,301.5 2045.3,310.3 2027.7,319.2 2010.0,328.0" stroke="#c0f29a" stroke-width="2.8"/><polyline points="2284.7,137.8 2268.8,144.3 2252.9,150.5 2237.0,158.4 2221.1,166.4 2205.2,176.1 2189.3,185.5 2173.1,195.2 2165.2,198.3" stroke="#dcdca4" stroke-width="2.8"/><polyline points="2165.2,198.3 2157.2,201.4 2141.3,207.9 2125.4,214.4 2109.5,222.3 2092.4,230.9 2074.8,239.7 2057.1,247.0 2039.5,254.4 2021.8,260.3 2004.1,262.6 1995.3,262.2" stroke="#e0caa2" stroke-width="2.8"/><polyline points="1995.3,262.2 1986.5,261.8 1971.7,260.3 1961.4,261.8" stroke="#f59a90" stroke-width="2.8"/><polyline points="2292.6,142.5 2276.7,150.5 2260.8,158.4 2244.9,164.9 2229.0,172.9 2213.1,182.3 2197.2,192.0 2181.3,201.4 2165.2,211.1 2149.3,222.3 2133.4,231.7 2116.0,242.6 2098.3,254.4 2080.7,266.2 2063.0,276.5 2054.2,281.6" stroke="#c0f29a" stroke-width="2.8"/><polyline points="2054.2,281.6 2045.3,286.8 2027.7,295.6 2010.0,301.5 1992.4,305.9 1974.7,308.9 1957.0,311.8" stroke="#dcdca4" stroke-width="2.8"/><polyline points="2307.3,154.3 2289.7,163.1 2280.8,167.6" stroke="#c0f29a" stroke-width="2.8"/><polyline points="2280.8,167.6 2272.0,172.0 2254.3,182.3 2236.7,192.6 2219.0,202.9 2210.2,208.0" stroke="#dcdca4" stroke-width="2.8"/><polyline points="2210.2,208.0 2201.4,213.2 2183.7,225.0 2166.0,236.7 2148.4,248.5 2139.5,253.7" stroke="#c0f29a" stroke-width="2.8"/><polyline points="2139.5,253.7 2130.7,258.8 2113.0,269.1 2095.4,278.0 2077.7,285.3 2060.1,292.7 2042.4,298.6 2024.7,301.5" stroke="#dcdca4" stroke-width="2.8"/><polyline points="2239.6,151.4 2224.9,160.2 2217.6,164.6" stroke="#f59a90" stroke-width="2.8"/><polyline points="2217.6,164.6 2210.2,169.0 2198.4,180.8 2189.6,192.6 2180.8,204.4 2169.0,216.1 2154.3,226.4 2139.5,236.7 2121.9,248.5 2104.2,258.8 2091.3,266.2" stroke="#ee1414" stroke-width="2.8"/><polyline points="2208.7,233.5 2197.8,242.3 2186.6,248.8 2175.8,255.6 2161.3,264.4 2144.8,274.1 2133.9,281.8 2126.3,288.5 2118.2,292.1" stroke="#ee1414" stroke-width="2.8"/><polyline points="2118.2,292.1 2110.1,295.6 2092.4,301.5" stroke="#f59a90" stroke-width="2.8"/><polyline points="2226.4,248.8 2216.4,254.4 2205.5,260.9 2194.3,266.5 2183.4,270.9 2166.9,277.4 2150.4,283.0 2133.9,288.5 2123.1,291.8" stroke="#f59a90" stroke-width="2.8"/><polyline points="2261.4,168.7 2232.9,182.9 2210.8,197.3 2189.0,218.2 2166.9,235.6 2144.8,252.0 2123.1,266.5 2101.0,278.5 2090.1,285.0" stroke="#2aee40" stroke-width="3.6"/><polyline points="2265.8,172.0 2254.9,186.1 2243.8,199.4 2232.9,209.4 2229.6,214.8" stroke="#ee1414" stroke-width="2.8"/><polyline points="2229.6,214.8 2226.4,220.3 2219.6,231.4 2212.0,243.5 2205.5,255.6 2197.8,266.5 2189.0,276.5 2183.4,281.3" stroke="#ff08cc" stroke-width="2.8"/><polyline points="2183.4,281.3 2177.8,286.2 2166.9,295.0 2156.0,302.7 2144.8,309.5 2127.8,316.2 2118.9,319.9" stroke="#ee1414" stroke-width="2.8"/><polyline points="2118.9,319.9 2110.1,323.6" stroke="#f59a90" stroke-width="2.8"/><polyline points="2213.1,199.4 2205.5,211.4 2196.7,222.6 2191.6,227.5" stroke="#ff08cc" stroke-width="2.8"/><polyline points="2191.6,227.5 2186.6,232.3 2176.9,241.2 2166.9,248.8 2156.0,257.6 2144.8,266.5 2133.9,275.3 2118.9,283.8" stroke="#ee1414" stroke-width="2.8"/><polyline points="2246.1,162.0 2243.8,172.0 2237.3,185.2 2231.7,197.3" stroke="#ff08cc" stroke-width="2.8"/><polyline points="2216.1,174.9 2213.9,180.8" stroke="#f03c82" stroke-width="2.8"/><polyline points="2213.9,180.8 2211.7,186.7 2209.6,195.5" stroke="#ff08cc" stroke-width="2.8"/><polyline points="2224.9,173.4 2220.5,183.8 2216.1,195.5" stroke="#ee1414" stroke-width="2.8"/><polyline points="2210.2,204.4 2192.5,213.2 2174.9,223.5 2157.2,235.3 2139.5,245.6 2121.9,255.9 2104.2,266.2" stroke="#c0f29a" stroke-width="2.8"/><polyline points="2198.4,204.4 2180.8,207.3 2163.1,213.2 2154.3,217.6" stroke="#dcdca4" stroke-width="2.8"/><polyline points="2154.3,217.6 2145.4,222.0 2127.8,230.9 2110.1,239.7 2092.4,248.5" stroke="#e0caa2" stroke-width="2.8"/><polyline points="2242.0,160.2 2239.9,175.2 2235.5,189.9 2229.3,204.9 2220.8,220.0 2212.3,234.7 2203.7,247.6 2193.1,260.3 2178.1,270.9 2169.6,275.2" stroke="#ff08cc" stroke-width="2.8"/><polyline points="2169.6,275.2 2161.0,279.4 2152.5,283.7" stroke="#f03c82" stroke-width="2.8"/><polyline points="2152.5,283.7 2144.0,288.0 2124.8,294.4 2103.6,300.9" stroke="#f59a90" stroke-width="2.8"/><polyline points="2220.8,189.9 2214.3,204.9 2205.8,220.0 2195.2,234.7 2182.5,247.6 2175.0,254.0" stroke="#ff08cc" stroke-width="2.8"/><polyline points="2175.0,254.0 2167.5,260.3 2150.4,270.9 2131.3,281.8 2114.2,290.3 2093.0,300.9" stroke="#ee1414" stroke-width="2.8"/><polyline points="2224.9,170.8 2218.7,183.8 2210.2,196.4 2199.3,209.4 2186.6,222.0 2174.0,234.7 2156.9,247.6 2139.8,260.3 2122.8,270.9 2103.6,281.8 2082.4,292.4 2060.9,303.0" stroke="#ee1414" stroke-width="2.8"/><polyline points="2111.3,250.0 2096.3,256.8 2079.5,266.2 2074.5,269.0" stroke="#2aee40" stroke-width="2.8"/><polyline points="2074.5,269.0 2069.5,271.8 2073.6,271.0" stroke="#22dde0" stroke-width="2.8"/><polyline points="2073.6,271.0 2077.7,270.3 2081.5,270.3" stroke="#1155d0" stroke-width="2.8"/><polyline points="2081.5,270.3 2085.4,270.3" stroke="#001a50" stroke-width="2.8"/><path d="M2085.4 270.3L2081.5 270.3" stroke="#001a50" stroke-width="4.2"/><polyline points="2060.1,271.8 2064.8,271.8" stroke="#2aee40" stroke-width="2.8"/><polyline points="2064.8,271.8 2069.5,271.8" stroke="#22dde0" stroke-width="2.8"/><polyline points="1963.8,288.5 1995.6,288.5" stroke="#22ee99" stroke-width="2.6"/><polyline points="2063.0,310.3 2071.8,306.7" stroke="#c0f29a" stroke-width="2.8"/><polyline points="2071.8,306.7 2080.7,303.0 2096.3,297.1 2102.9,295.8" stroke="#2aee40" stroke-width="2.8"/><polyline points="2102.9,295.8 2109.5,294.4 2113.8,294.0" stroke="#22dde0" stroke-width="2.8"/><polyline points="2113.8,294.0 2118.1,293.6 2123.1,295.3 2123.9,296.9" stroke="#1155d0" stroke-width="2.8"/><polyline points="2123.9,296.9 2124.8,298.6 2124.4,301.9" stroke="#22dde0" stroke-width="2.8"/><polyline points="2124.4,301.9 2123.9,305.3 2119.5,310.3 2111.3,313.9 2097.7,315.3 2086.3,313.9 2082.0,313.0" stroke="#dcdca4" stroke-width="2.8"/><polyline points="2082.0,313.0 2077.7,312.1 2063.0,316.2 2048.3,322.1" stroke="#f59a90" stroke-width="2.8"/><polyline points="2045.3,313.3 2051.5,312.2" stroke="#2aee40" stroke-width="2.8"/><polyline points="2051.5,312.2 2057.7,311.2 2061.4,310.8" stroke="#1155d0" stroke-width="2.8"/><polyline points="2061.4,310.8 2065.1,310.3" stroke="#001a50" stroke-width="2.8"/><path d="M2065.1 310.3L2061.4 310.8" stroke="#001a50" stroke-width="4.2"/><polyline points="2004.1,344.2 2012.5,342.0" stroke="#c0f29a" stroke-width="2.8"/><polyline points="2012.5,342.0 2020.9,339.8 2025.9,339.3" stroke="#2aee40" stroke-width="2.8"/><polyline points="2025.9,339.3 2030.9,338.9 2035.0,337.7" stroke="#22dde0" stroke-width="2.8"/><polyline points="2035.0,337.7 2039.2,336.5 2044.2,336.5" stroke="#1155d0" stroke-width="2.8"/><polyline points="2044.2,336.5 2049.2,336.5 2049.6,338.9" stroke="#001a50" stroke-width="2.8"/><polyline points="2049.6,338.9 2050.1,341.2" stroke="#000000" stroke-width="2.8"/><path d="M2050.1 341.2L2049.6 338.9" stroke="#000000" stroke-width="4.2"/><polyline points="2091.3,230.0 2072.7,241.7 2055.9,251.8 2039.2,263.5 2022.4,275.3 2005.6,287.1 1988.8,297.1 1980.4,300.5" stroke="#ee1414" stroke-width="2.8"/><polyline points="1980.4,300.5 1972.0,303.9 1955.3,308.9 1947.0,313.9 1942.9,316.4" stroke="#f59a90" stroke-width="2.8"/><polyline points="1942.9,316.4 1938.8,318.9 1930.2,325.6 1922.0,333.9 1912.9,345.7 1908.5,351.5" stroke="#ee1414" stroke-width="2.8"/><polyline points="1908.5,351.5 1904.0,357.4 1896.7,369.2" stroke="#ff08cc" stroke-width="2.8"/><polyline points="2019.1,230.0 2005.6,238.5 1996.5,242.6" stroke="#f59a90" stroke-width="2.8"/><polyline points="1996.5,242.6 1987.3,246.7 1978.1,249.2" stroke="#dcdca4" stroke-width="2.8"/><polyline points="1978.1,249.2 1968.8,251.8 1960.6,257.6 1956.3,263.1" stroke="#f59a90" stroke-width="2.8"/><polyline points="1956.3,263.1 1952.0,268.5 1947.9,274.4" stroke="#f03c82" stroke-width="2.8"/><polyline points="1947.9,274.4 1943.8,280.3 1937.0,293.6 1930.2,305.3 1922.0,317.1 1913.5,328.9 1905.2,340.7 1896.7,353.9 1888.4,364.2 1879.9,374.2 1868.7,385.4 1856.9,395.7 1851.1,400.1" stroke="#ff08cc" stroke-width="2.8"/><polyline points="1851.1,400.1 1845.2,404.5" stroke="#ee1414" stroke-width="2.8"/><polyline points="1983.8,261.8 1990.6,262.6" stroke="#f59a90" stroke-width="2.8"/><polyline points="1990.6,262.6 1997.4,263.5 2005.7,263.5" stroke="#e0caa2" stroke-width="2.8"/><polyline points="2005.7,263.5 2014.1,263.5 2030.9,258.5 2047.7,251.8 2063.0,242.6" stroke="#dcdca4" stroke-width="2.8"/><polyline points="1939.4,301.5 1962.9,298.6 1983.5,298.6" stroke="#dcdca4" stroke-width="2.8"/><polyline points="1983.5,298.6 2004.1,298.6 2039.5,294.1 2057.1,289.7" stroke="#e0caa2" stroke-width="2.8"/><polyline points="2057.1,289.7 2074.8,285.3 2092.4,278.7" stroke="#dcdca4" stroke-width="2.8"/><polyline points="2092.4,278.7 2110.1,272.1 2139.5,257.3" stroke="#c0f29a" stroke-width="2.8"/><polyline points="1945.3,310.3 1974.7,305.9 1992.4,306.7" stroke="#e0caa2" stroke-width="2.8"/><polyline points="1992.4,306.7 2010.0,307.4 2045.3,303.0 2060.1,299.3" stroke="#dcdca4" stroke-width="2.8"/><polyline points="2060.1,299.3 2074.8,295.6 2104.2,283.8" stroke="#c0f29a" stroke-width="2.8"/><polyline points="1942.3,319.2 1971.7,316.2 2004.1,316.2 2033.6,314.7 2045.3,313.3" stroke="#c0f29a" stroke-width="2.8"/><polyline points="2045.3,313.3 2057.1,311.8" stroke="#2aee40" stroke-width="2.8"/><polyline points="1930.5,330.9 1960.0,325.1 1974.7,323.6" stroke="#dcdca4" stroke-width="2.8"/><polyline points="1974.7,323.6 1989.4,322.1 2018.8,320.6 2033.6,318.4" stroke="#e0caa2" stroke-width="2.8"/><polyline points="2033.6,318.4 2048.3,316.2 2077.7,307.4" stroke="#dcdca4" stroke-width="2.8"/><polyline points="1933.5,341.2 1954.1,332.4 1974.7,328.0 1985.0,327.3" stroke="#f59a90" stroke-width="2.8"/><polyline points="1985.0,327.3 1995.3,326.5 2015.9,325.1 2027.7,322.1" stroke="#dcdca4" stroke-width="2.8"/><polyline points="2027.7,322.1 2039.5,319.2 2063.0,310.3" stroke="#c0f29a" stroke-width="2.8"/><polyline points="1915.8,360.4 1939.4,345.7 1951.1,339.8" stroke="#c0f29a" stroke-width="2.8"/><polyline points="1951.1,339.8 1962.9,333.9 1974.7,328.0 1983.5,325.1" stroke="#2aee40" stroke-width="2.8"/><polyline points="1983.5,325.1 1992.4,322.1" stroke="#c0f29a" stroke-width="2.8"/><polyline points="1954.1,363.3 1974.7,351.5 1980.6,348.6" stroke="#2aee40" stroke-width="2.8"/><polyline points="1980.6,348.6 1986.5,345.7 2004.1,339.8 2014.4,339.0" stroke="#c0f29a" stroke-width="2.8"/><polyline points="2014.4,339.0 2024.7,338.3" stroke="#2aee40" stroke-width="2.8"/><polyline points="1927.6,372.2 1951.1,360.4 1961.4,354.5" stroke="#f59a90" stroke-width="2.8"/><polyline points="1961.4,354.5 1971.7,348.6 1980.6,344.9" stroke="#ee1414" stroke-width="2.8"/><polyline points="1980.6,344.9 1989.4,341.2 2004.1,338.3" stroke="#f59a90" stroke-width="2.8"/><polyline points="1962.9,378.0 1986.5,363.3 2010.0,350.1 2018.8,345.7" stroke="#2aee40" stroke-width="2.6"/><polyline points="2018.8,345.7 2027.7,341.2" stroke="#c0f29a" stroke-width="2.6"/><polyline points="1915.8,386.9 1939.4,378.0 1968.8,366.3 1998.2,353.0 2027.7,342.7 2049.2,338.3" stroke="#c0f29a" stroke-width="2.8"/><polyline points="1898.2,395.7 1927.6,385.4 1942.3,380.2" stroke="#dcdca4" stroke-width="2.8"/><polyline points="1942.3,380.2 1957.0,375.1 1986.5,363.3 2015.9,353.0 2030.6,348.6" stroke="#c0f29a" stroke-width="2.8"/><polyline points="2030.6,348.6 2045.3,344.2 2074.8,332.4 2104.2,319.2 2116.0,313.3" stroke="#f59a90" stroke-width="2.8"/><polyline points="2116.0,313.3 2127.8,307.4" stroke="#ee1414" stroke-width="2.8"/><polyline points="1974.7,254.4 1968.8,263.2" stroke="#f03c82" stroke-width="2.8"/><polyline points="1968.8,263.2 1962.9,272.1 1952.6,289.7 1942.3,307.4 1930.5,322.1 1918.8,336.8 1908.5,350.1 1899.6,361.8 1889.3,373.6 1879.0,383.9 1868.7,392.8" stroke="#ff08cc" stroke-width="2.8"/><polyline points="1948.2,301.5 1943.8,307.4" stroke="#ee1414" stroke-width="2.8"/><polyline points="1943.8,307.4 1939.4,313.3 1927.6,328.0 1917.3,341.2 1908.5,353.0 1901.1,364.8 1892.3,378.0 1883.4,389.8 1874.6,398.6 1865.8,406.0" stroke="#ff08cc" stroke-width="2.8"/><polyline points="1936.4,319.2 1927.6,330.9 1918.8,342.7 1915.1,347.9" stroke="#ee1414" stroke-width="2.8"/><polyline points="1915.1,347.9 1911.4,353.0 1904.0,363.3 1898.2,373.6 1890.8,385.4 1883.4,395.7 1876.1,404.5" stroke="#ff08cc" stroke-width="2.8"/><polyline points="1924.6,328.0 1915.8,338.3 1907.0,348.6 1898.2,357.4 1887.8,367.7 1877.5,376.6 1868.7,383.9 1863.6,387.6" stroke="#ff08cc" stroke-width="2.8"/><polyline points="1863.6,387.6 1858.4,391.3 1848.1,397.2 1836.3,401.6" stroke="#ee1414" stroke-width="2.8"/><polyline points="1921.7,339.8 1914.3,348.6 1911.4,353.0" stroke="#ee1414" stroke-width="2.8"/><polyline points="1911.4,353.0 1908.5,357.4 1902.6,367.7 1901.1,378.0 1898.2,389.8 1892.3,401.6 1883.4,410.4 1879.0,414.1" stroke="#ff08cc" stroke-width="2.8"/><polyline points="1879.0,414.1 1874.6,417.8 1865.8,423.7 1854.0,429.6" stroke="#ee1414" stroke-width="2.8"/><polyline points="1912.9,363.3 1908.5,375.1 1904.0,386.9 1899.6,398.6 1893.7,410.4 1886.4,420.7 1882.0,425.1" stroke="#ff08cc" stroke-width="2.8"/><polyline points="1882.0,425.1 1877.5,429.6 1865.8,436.9 1854.0,442.8 1842.2,447.2" stroke="#ee1414" stroke-width="2.8"/><polyline points="2014.1,375.7 2009.1,376.9" stroke="#f59a90" stroke-width="2.8"/><polyline points="2009.1,376.9 2004.1,378.0 1992.4,382.5 1980.6,386.9 1968.8,391.3 1957.0,397.2 1945.3,404.5 1937.6,409.2" stroke="#ee1414" stroke-width="2.8"/><polyline points="1937.6,409.2 1929.9,414.0 1921.7,422.2 1913.5,427.8 1904.0,435.4 1897.0,439.6 1886.4,445.7 1879.9,447.8 1874.3,449.7" stroke="#ff08cc" stroke-width="2.8"/><polyline points="1874.3,449.7 1868.7,451.6 1856.9,456.1 1849.6,458.3" stroke="#ee1414" stroke-width="2.8"/><polyline points="1849.6,458.3 1842.2,460.5" stroke="#f59a90" stroke-width="2.8"/><polyline points="1950.3,400.7 1942.0,419.3 1937.7,425.1" stroke="#ee1414" stroke-width="2.8"/><polyline points="1937.7,425.1 1933.5,431.0 1925.2,439.3 1915.8,447.2 1908.5,452.8 1902.6,456.9" stroke="#ff08cc" stroke-width="2.8"/><polyline points="1902.6,456.9 1896.7,461.1 1891.7,462.8 1874.9,467.8 1866.5,470.3" stroke="#ee1414" stroke-width="2.8"/><polyline points="1866.5,470.3 1858.1,472.8 1833.1,479.6 1807.8,482.8 1797.8,483.7" stroke="#f59a90" stroke-width="2.8"/><polyline points="1797.8,483.7 1787.8,484.6 1781.1,485.8" stroke="#c0f29a" stroke-width="2.8"/><polyline points="1781.1,485.8 1774.5,487.0" stroke="#2aee40" stroke-width="2.8"/><polyline points="1992.1,378.9 1967.0,387.5 1958.6,394.1" stroke="#f59a90" stroke-width="2.8"/><polyline points="1958.6,394.1 1950.3,400.7" stroke="#ee1414" stroke-width="2.8"/><polyline points="1913.5,453.1 1897.0,461.1 1879.9,467.8 1868.4,471.5" stroke="#ee1414" stroke-width="2.8"/><polyline points="1868.4,471.5 1856.9,475.2 1827.5,479.6 1798.1,484.0" stroke="#f59a90" stroke-width="2.8"/><polyline points="1886.4,389.8 1874.6,398.6 1862.8,404.5 1851.1,408.9 1839.3,411.9 1831.9,412.6" stroke="#ee1414" stroke-width="2.8"/><polyline points="1831.9,412.6 1824.6,413.4 1806.9,414.8 1786.3,416.3" stroke="#f59a90" stroke-width="2.8"/><polyline points="1880.5,407.5 1868.7,416.3 1856.9,423.7 1845.2,429.6 1839.3,431.8" stroke="#ee1414" stroke-width="2.8"/><polyline points="1839.3,431.8 1833.4,434.0 1815.7,437.5 1798.1,439.9" stroke="#f59a90" stroke-width="2.8"/><polyline points="1883.4,423.7 1871.7,432.5 1861.4,439.9 1851.1,445.7 1839.3,450.2 1833.4,451.6" stroke="#ee1414" stroke-width="2.8"/><polyline points="1833.4,451.6 1827.5,453.1" stroke="#f59a90" stroke-width="2.8"/><polyline points="1874.6,436.9 1865.8,442.8 1855.5,448.7 1845.2,454.0 1833.4,459.0" stroke="#ee1414" stroke-width="3.0"/><polyline points="1937.6,290.0 1931.7,301.8 1923.8,313.3 1914.3,325.1 1906.1,336.8 1896.7,348.3 1887.6,360.1 1878.1,369.5 1871.1,375.1" stroke="#ff08cc" stroke-width="2.8"/><polyline points="1948.2,319.2 1941.1,328.6 1934.1,339.2 1927.0,350.7 1920.2,360.1 1910.8,371.9 1903.7,381.0 1896.7,389.2 1888.7,398.6 1881.7,406.9 1878.1,412.5" stroke="#ff08cc" stroke-width="2.8"/><polyline points="1935.2,325.1 1928.2,336.8 1919.1,348.3 1912.0,357.7" stroke="#ff08cc" stroke-width="4.5"/><polyline points="1936.4,362.4 1929.4,371.9 1923.8,381.0 1917.9,390.4 1908.5,398.6 1901.4,406.9 1895.5,413.7" stroke="#ff08cc" stroke-width="2.8"/><polyline points="1900.2,459.9 1908.5,453.4 1917.9,444.3 1927.0,432.5 1934.1,421.9 1936.4,417.2" stroke="#ff08cc" stroke-width="2.8"/><polyline points="1936.4,417.2 1938.8,412.5 1943.5,404.5 1948.2,397.5 1950.6,394.5" stroke="#ee1414" stroke-width="2.8"/><polyline points="1950.6,394.5 1952.9,391.6 1962.9,385.4 1974.7,382.5" stroke="#f59a90" stroke-width="2.8"/><polyline points="1845.5,446.3 1861.6,434.9 1873.4,426.6 1882.8,419.5" stroke="#ee1414" stroke-width="5.0"/><polyline points="1850.2,408.1 1861.6,401.0 1871.1,395.1 1880.5,390.4" stroke="#ee1414" stroke-width="3.4"/><polyline points="1915.5,336.8 1923.8,328.6 1930.5,319.2 1932.9,308.6" stroke="#ee1414" stroke-width="3.4"/><polyline points="1922.6,358.9 1930.5,351.8 1937.6,344.8 1945.8,339.2 1950.6,338.6" stroke="#ee1414" stroke-width="2.8"/><polyline points="1950.6,338.6 1955.3,338.0" stroke="#f59a90" stroke-width="2.8"/><polyline points="1840.7,367.1 1846.6,371.1" stroke="#f03c82" stroke-width="4.5"/><polyline points="1846.6,371.1 1852.5,375.1 1864.0,383.3" stroke="#ff08cc" stroke-width="4.5"/><polyline points="1871.7,392.8 1872.8,393.6" stroke="#22dde0" stroke-width="3.5"/><polyline points="1872.8,393.6 1874.0,394.5 1874.6,396.0" stroke="#1155d0" stroke-width="3.5"/><polyline points="1874.6,396.0 1875.2,397.5" stroke="#22dde0" stroke-width="3.5"/><polyline points="1872.0,351.0 1844.9,359.8 1811.9,373.0 1778.9,386.3 1746.0,399.2 1734.9,403.7" stroke="#c0f29a" stroke-width="2.4"/><polyline points="1734.9,403.7 1723.9,408.1 1712.8,412.5" stroke="#2aee40" stroke-width="2.4"/><polyline points="1712.8,412.5 1701.8,416.9 1680.0,426.9" stroke="#c0f29a" stroke-width="2.4"/><polyline points="1872.0,361.8 1844.9,370.7 1811.9,383.9 1789.8,392.8 1756.9,406.0 1734.8,415.7" stroke="#c0f29a" stroke-width="2.4"/><polyline points="1872.0,386.3 1839.3,394.8 1806.3,410.4 1778.9,423.7 1767.9,428.5" stroke="#c0f29a" stroke-width="2.4"/><polyline points="1767.9,428.5 1756.9,433.4 1746.0,439.0" stroke="#2aee40" stroke-width="2.4"/><polyline points="1872.0,436.6 1844.9,445.5 1811.9,454.3 1778.9,456.6" stroke="#dcdca4" stroke-width="2.4"/><polyline points="1856.9,330.9 1827.5,345.7 1798.1,360.4 1768.6,373.6 1739.2,386.9 1724.5,393.5" stroke="#c0f29a" stroke-width="2.4"/><polyline points="1724.5,393.5 1709.8,400.1 1680.3,413.4" stroke="#2aee40" stroke-width="2.4"/><polyline points="1896.7,310.3 1871.7,322.1 1845.2,335.4 1815.7,348.6 1786.3,361.8" stroke="#c0f29a" stroke-width="2.4"/><polyline points="1618.5,464.6 1620.1,462.8" stroke="#001a50" stroke-width="2.8"/><polyline points="1620.1,462.8 1621.7,461.1 1625.1,459.4" stroke="#1155d0" stroke-width="2.8"/><polyline points="1625.1,459.4 1628.5,457.8 1634.4,452.8" stroke="#22dde0" stroke-width="2.8"/><polyline points="1634.4,452.8 1640.3,447.8 1657.1,436.0 1673.8,424.3 1690.6,416.0 1700.6,411.0 1704.0,408.4" stroke="#2aee40" stroke-width="2.8"/><polyline points="1704.0,408.4 1707.4,405.7 1712.4,401.6" stroke="#c0f29a" stroke-width="2.8"/><polyline points="1712.4,401.6 1717.4,397.5 1725.4,392.9" stroke="#2aee40" stroke-width="2.8"/><polyline points="1725.4,392.9 1733.3,388.3 1751.0,379.5 1759.8,375.1" stroke="#c0f29a" stroke-width="2.8"/><polyline points="1759.8,375.1 1768.6,370.7 1786.3,361.8 1804.0,353.0 1821.6,345.7" stroke="#2aee40" stroke-width="2.8"/><path d="M1618.5 464.6L1620.1 462.8" stroke="#001a50" stroke-width="4.2"/><polyline points="1645.3,463.7 1647.8,462.4" stroke="#001a50" stroke-width="2.8"/><polyline points="1647.8,462.4 1650.3,461.1 1653.7,460.3" stroke="#1155d0" stroke-width="2.8"/><polyline points="1653.7,460.3 1657.1,459.6 1661.2,456.6" stroke="#22dde0" stroke-width="2.8"/><polyline points="1661.2,456.6 1665.3,453.7 1682.1,442.8 1698.9,432.5 1715.6,424.3 1723.0,420.3" stroke="#2aee40" stroke-width="2.8"/><polyline points="1723.0,420.3 1730.4,416.3 1745.1,408.9" stroke="#c0f29a" stroke-width="2.8"/><path d="M1645.3 463.7L1647.8 462.4" stroke="#001a50" stroke-width="4.2"/><polyline points="1703.9,459.6 1709.0,458.7" stroke="#001a50" stroke-width="2.8"/><polyline points="1709.0,458.7 1714.2,457.8 1719.2,456.2" stroke="#1155d0" stroke-width="2.8"/><polyline points="1719.2,456.2 1724.2,454.6 1726.7,453.3" stroke="#22dde0" stroke-width="2.8"/><polyline points="1726.7,453.3 1729.2,451.9 1735.1,450.6" stroke="#2aee40" stroke-width="2.8"/><polyline points="1735.1,450.6 1741.0,449.3 1757.7,449.3 1766.1,449.7" stroke="#dcdca4" stroke-width="2.8"/><polyline points="1766.1,449.7 1774.5,450.2 1791.0,447.8 1799.4,446.0" stroke="#e0caa2" stroke-width="2.8"/><polyline points="1799.4,446.0 1807.8,444.3 1824.6,439.3 1832.9,435.9" stroke="#f59a90" stroke-width="2.8"/><polyline points="1832.9,435.9 1841.3,432.5 1858.1,423.7 1874.9,413.4" stroke="#ee1414" stroke-width="2.8"/><path d="M1703.9 459.6L1708.8 458.7" stroke="#001a50" stroke-width="4.2"/><polyline points="1628.5,457.8 1631.0,457.8" stroke="#2aee40" stroke-width="2.8"/><polyline points="1631.0,457.8 1633.5,457.8 1645.3,458.3" stroke="#c0f29a" stroke-width="2.8"/><polyline points="1645.3,458.3 1657.1,458.7 1682.1,456.9 1707.4,455.2 1732.4,453.7 1745.1,454.4" stroke="#dcdca4" stroke-width="2.8"/><polyline points="1745.1,454.4 1757.7,455.2 1782.8,451.0 1795.3,448.5" stroke="#e0caa2" stroke-width="2.8"/><polyline points="1795.3,448.5 1807.8,446.0 1824.6,441.0" stroke="#f59a90" stroke-width="2.8"/><polyline points="1615.3,394.2 1636.2,394.2" stroke="#c0f29a" stroke-width="2.8"/><polyline points="1636.2,394.2 1657.1,394.2 1690.6,392.5 1724.2,391.6 1732.6,391.1" stroke="#dcdca4" stroke-width="2.8"/><polyline points="1732.6,391.1 1741.0,390.7 1774.5,389.2 1807.8,385.7 1841.3,380.7 1858.1,377.5 1874.9,373.9 1896.7,363.3 1915.8,353.0" stroke="#c0f29a" stroke-width="2.8"/><polyline points="1640.3,400.7 1665.3,401.6 1690.6,405.7 1699.0,407.0" stroke="#dcdca4" stroke-width="2.8"/><polyline points="1699.0,407.0 1707.4,408.4 1715.8,407.9" stroke="#e0caa2" stroke-width="2.8"/><polyline points="1715.8,407.9 1724.2,407.5 1757.7,406.6 1791.0,403.4 1824.6,397.5 1832.9,395.0" stroke="#f59a90" stroke-width="2.8"/><polyline points="1832.9,395.0 1841.3,392.5 1858.1,385.7 1871.7,378.0" stroke="#ee1414" stroke-width="2.8"/><polyline points="1606.7,419.3 1640.3,417.5 1652.8,416.8" stroke="#e0caa2" stroke-width="2.8"/><polyline points="1652.8,416.8 1665.3,416.0 1690.6,413.4 1715.6,409.2 1741.0,408.4 1774.5,407.5 1807.8,406.6 1833.1,405.7 1841.5,403.7" stroke="#f59a90" stroke-width="2.8"/><polyline points="1841.5,403.7 1849.9,401.6 1866.7,395.7" stroke="#ee1414" stroke-width="2.8"/><polyline points="1698.9,421.0 1711.5,421.8" stroke="#c0f29a" stroke-width="2.8"/><polyline points="1711.5,421.8 1724.2,422.5 1749.2,425.1 1774.5,424.3 1787.0,423.4" stroke="#dcdca4" stroke-width="2.8"/><polyline points="1787.0,423.4 1799.5,422.5 1812.0,422.5" stroke="#e0caa2" stroke-width="2.8"/><polyline points="1812.0,422.5 1824.6,422.5 1841.3,417.5 1849.7,414.2" stroke="#f59a90" stroke-width="2.8"/><polyline points="1849.7,414.2 1858.1,411.0 1871.7,404.5" stroke="#ee1414" stroke-width="2.8"/><polyline points="1650.3,419.3 1662.1,418.4" stroke="#22dde0" stroke-width="2.8"/><polyline points="1650.3,419.3 1649.4,422.5 1649.8,425.0" stroke="#22dde0" stroke-width="2.8"/><polyline points="1649.8,425.0 1650.3,427.5 1653.7,429.7" stroke="#c0f29a" stroke-width="2.8"/><polyline points="1653.7,429.7 1657.1,431.9 1665.3,431.0 1672.8,428.8" stroke="#dcdca4" stroke-width="2.8"/><polyline points="1672.8,428.8 1680.3,426.6" stroke="#c0f29a" stroke-width="2.8"/><polyline points="1680.6,430.1 1683.8,428.8" stroke="#001a50" stroke-width="2.8"/><polyline points="1683.8,428.8 1687.1,427.5 1692.2,426.8" stroke="#1155d0" stroke-width="2.8"/><polyline points="1692.2,426.8 1697.4,426.0 1703.6,424.1" stroke="#22dde0" stroke-width="2.8"/><polyline points="1703.6,424.1 1709.8,422.2 1724.5,414.8 1739.2,407.5" stroke="#2aee40" stroke-width="2.8"/><path d="M1680.6 430.1L1683.8 428.8" stroke="#001a50" stroke-width="4.2"/><polyline points="1764.2,427.5 1766.0,431.9" stroke="#22dde0" stroke-width="2.8"/><polyline points="1771.0,421.0 1782.8,420.1" stroke="#22dde0" stroke-width="2.8"/><polyline points="1724.2,486.4 1725.8,485.0" stroke="#001a50" stroke-width="2.8"/><polyline points="1725.8,485.0 1727.4,483.7 1729.9,482.5" stroke="#1155d0" stroke-width="2.8"/><polyline points="1729.9,482.5 1732.4,481.4 1736.7,478.9" stroke="#22dde0" stroke-width="2.8"/><polyline points="1736.7,478.9 1741.0,476.4 1757.7,466.1 1766.0,461.1 1783.3,450.2 1790.7,445.7" stroke="#2aee40" stroke-width="2.8"/><polyline points="1790.7,445.7 1798.1,441.3" stroke="#c0f29a" stroke-width="2.8"/><path d="M1724.2 486.4L1725.8 485.0" stroke="#001a50" stroke-width="4.2"/><polyline points="1757.7,472.8 1761.9,471.2" stroke="#001a50" stroke-width="3.0"/><polyline points="1761.9,471.2 1766.0,469.6 1774.5,464.6 1778.6,462.8" stroke="#000000" stroke-width="3.0"/><polyline points="1778.6,462.8 1782.8,461.1 1786.9,460.3" stroke="#1155d0" stroke-width="3.0"/><polyline points="1786.9,460.3 1791.0,459.6 1799.4,455.3" stroke="#22dde0" stroke-width="3.0"/><polyline points="1799.4,455.3 1807.8,451.0 1824.6,442.8 1832.9,440.3" stroke="#2aee40" stroke-width="3.0"/><polyline points="1832.9,440.3 1841.3,437.8 1858.1,431.0" stroke="#c0f29a" stroke-width="3.0"/><polyline points="1751.0,488.7 1766.0,487.8 1770.2,488.3" stroke="#22dde0" stroke-width="2.8"/><polyline points="1770.2,488.3 1774.5,488.7 1777.0,486.2" stroke="#001a50" stroke-width="2.8"/><polyline points="1777.0,486.2 1779.5,483.7 1787.8,477.8 1789.4,476.2" stroke="#1155d0" stroke-width="2.8"/><polyline points="1789.4,476.2 1791.0,474.6 1799.4,469.6" stroke="#22dde0" stroke-width="2.8"/><polyline points="1799.4,469.6 1807.8,464.6 1824.6,454.6 1841.3,442.8 1849.7,438.5" stroke="#2aee40" stroke-width="2.8"/><polyline points="1849.7,438.5 1858.1,434.3 1874.6,425.1" stroke="#c0f29a" stroke-width="2.8"/><polyline points="1597.9,400.1 1606.7,395.0" stroke="#22dde0" stroke-width="2.8"/><polyline points="1606.7,395.0 1615.6,389.8 1636.2,378.0 1659.7,364.8 1670.0,358.9" stroke="#2aee40" stroke-width="2.8"/><polyline points="1670.0,358.9 1680.3,353.0 1703.9,339.8" stroke="#c0f29a" stroke-width="2.8"/><polyline points="1621.4,410.4 1645.0,397.2 1668.5,383.9 1689.1,373.6 1703.9,366.3" stroke="#2aee40" stroke-width="2.8"/><polyline points="1674.4,383.9 1686.2,378.0" stroke="#c0f29a" stroke-width="2.8"/><polyline points="1686.2,378.0 1698.0,372.2 1708.3,366.3" stroke="#2aee40" stroke-width="2.8"/><polyline points="1708.3,366.3 1718.6,360.4 1745.1,347.1 1768.6,335.4 1798.1,322.1 1827.5,308.9 1856.9,298.6 1886.4,286.8 1915.8,272.1" stroke="#c0f29a" stroke-width="2.8"/><polyline points="1709.8,401.6 1721.5,394.2 1727.4,390.6" stroke="#2aee40" stroke-width="2.8"/><polyline points="1727.4,390.6 1733.3,386.9 1756.9,378.0 1780.4,372.2 1804.0,366.3 1827.5,360.4 1851.1,353.0 1874.6,344.2 1896.7,332.4 1918.8,319.2" stroke="#c0f29a" stroke-width="2.8"/><polyline points="1768.6,383.9 1792.2,373.6 1815.7,363.3 1824.6,360.4" stroke="#2aee40" stroke-width="2.8"/><polyline points="1733.3,434.0 1756.9,423.7 1768.6,418.5" stroke="#c0f29a" stroke-width="2.8"/><polyline points="1768.6,418.5 1780.4,413.4 1792.2,408.9" stroke="#2aee40" stroke-width="2.8"/><polyline points="1792.2,408.9 1804.0,404.5 1827.5,397.2 1851.1,389.8" stroke="#c0f29a" stroke-width="2.8"/><polyline points="1798.1,457.5 1821.6,448.7 1833.4,444.3" stroke="#c0f29a" stroke-width="2.8"/><polyline points="1833.4,444.3 1845.2,439.9 1856.9,434.7" stroke="#2aee40" stroke-width="2.8"/><polyline points="1856.9,434.7 1868.7,429.6 1892.3,419.3 1915.8,407.5 1939.4,395.7 1962.9,383.9 1986.5,373.6" stroke="#c0f29a" stroke-width="2.8"/><polyline points="1815.7,472.2 1842.2,463.4 1868.7,453.1 1896.7,441.3 1921.7,429.6 1933.5,423.7" stroke="#c0f29a" stroke-width="2.8"/><polyline points="1933.5,423.7 1945.3,417.8 1968.8,407.5 1980.6,401.6" stroke="#dcdca4" stroke-width="2.8"/><polyline points="1980.6,401.6 1992.4,395.7 2015.9,385.4" stroke="#c0f29a" stroke-width="2.8"/><polyline points="1798.1,478.1 1815.7,473.7 1824.6,470.0" stroke="#2aee40" stroke-width="2.8"/><polyline points="1824.6,470.0 1833.4,466.4 1856.9,457.5" stroke="#c0f29a" stroke-width="2.8"/><polyline points="1780.4,436.9 1804.0,428.1 1827.5,419.3 1839.3,414.8" stroke="#c0f29a" stroke-width="2.8"/><polyline points="1839.3,414.8 1851.1,410.4 1874.6,401.6 1896.7,392.8 1906.2,388.3" stroke="#dcdca4" stroke-width="2.8"/><polyline points="1906.2,388.3 1915.8,383.9" stroke="#c0f29a" stroke-width="2.8"/><polyline points="1896.7,404.5 1921.7,395.7 1945.3,386.9 1957.0,381.7" stroke="#c0f29a" stroke-width="2.6"/><polyline points="1957.0,381.7 1968.8,376.6 1992.4,366.3 2013.0,356.0 2023.3,351.5" stroke="#2aee40" stroke-width="2.6"/><polyline points="2023.3,351.5 2033.6,347.1" stroke="#c0f29a" stroke-width="2.6"/><rect x="1896" y="66" width="2" height="424" fill="#454545"/><rect x="1592" y="375" width="1090" height="2" fill="#454545"/><path d="M1904.5 362.5L1897 377" stroke="#000" stroke-width="7" stroke-linecap="butt"/><rect x="1898" y="361" width="9" height="6" fill="#000"/><path d="M1998.2 400.6L2049.3 338.9L2052.6 396.8Z" stroke="#000" stroke-width="2" stroke-linejoin="miter"/><rect x="2050" y="340" width="5" height="5" fill="#000"/><rect x="1996.5" y="399" width="3" height="3" fill="#000"/></svg>
<div class="a" style="left:1590px;top:492px;width:1094px;height:18px;background:#fbfbfb"></div>
<div class="a" style="left:2130px;top:495px;width:12px;height:12px;border-radius:50%;background:#7f7f7f"></div>
<div class="a" style="left:1590px;top:510px;width:1094px;height:698px;background:#fff;border-top:2px solid #000;border-bottom:2px solid #000"></div>
<div class="a" style="left:1966px;top:512px;width:342px;height:694px;background:#ffffcc"></div>
<div class="a" style="left:1590px;top:558px;width:1094px;height:2px;background:#c3c3c3"></div>
<div class="a" style="left:1590px;top:640px;width:1094px;height:2px;background:repeating-linear-gradient(90deg,#c3c3c3 0 40px,transparent 40px 56px)"></div>
<div class="a" style="left:1590px;top:720px;width:1094px;height:2px;background:#c3c3c3"></div>
<div class="a" style="left:1590px;top:802px;width:1094px;height:2px;background:repeating-linear-gradient(90deg,#c3c3c3 0 40px,transparent 40px 56px)"></div>
<div class="a" style="left:1590px;top:882px;width:1094px;height:2px;background:#c3c3c3"></div>
<div class="a" style="left:1590px;top:964px;width:1094px;height:2px;background:repeating-linear-gradient(90deg,#c3c3c3 0 40px,transparent 40px 56px)"></div>
<div class="a" style="left:1590px;top:1044px;width:1094px;height:2px;background:#c3c3c3"></div>
<div class="a" style="left:1590px;top:1126px;width:1094px;height:2px;background:repeating-linear-gradient(90deg,#c3c3c3 0 40px,transparent 40px 56px)"></div>
<div class="lab" style="left:1630.5px;top:559px">40</div>
<div class="lab" style="left:1630.5px;top:641px">35</div>
<div class="lab" style="left:1630.5px;top:721px">30</div>
<div class="lab" style="left:1630.5px;top:803px">25</div>
<div class="lab" style="left:1630.5px;top:883px">20</div>
<div class="lab" style="left:1630.5px;top:965px">15</div>
<div class="lab" style="left:1630.5px;top:1045px">10</div>
<div class="lab" style="left:1630.5px;top:1127px">5</div>
<div class="a" style="left:1965px;top:512px;width:2px;height:694px;background:#8a8a80"></div>
<div class="a" style="left:2307px;top:512px;width:2px;height:694px;background:#8a8a80"></div>
<div class="a" style="left:1605px;top:537px;width:154px;height:2px;background:#b4b4b4"></div>
<div class="a" style="left:1607px;top:539px;width:152px;height:2px;background:#000"></div>
<div class="a" style="left:1605px;top:537px;width:2px;height:6px;background:#b4b4b4"></div>
<div class="a" style="left:1759px;top:527px;width:16px;height:28px;background:#e2e2e2;border-right:2px solid #000;border-bottom:2px solid #000;border-left:1px solid #f4f4f4;border-top:1px solid #f4f4f4"></div>
<div class="a" style="left:1777px;top:539px;width:2px;height:2px;background:#222"></div>
<svg class="a" style="left:1590px;top:500px" width="1094" height="120"><polyline points="0.0,82.4 18.6,80.2 36.2,82.6 54.0,73.6 72.4,76.3 91.0,76.3 108.7,71.9 126.6,74.0 144.5,76.3 162.4,78.5 180.0,74.3 198.0,76.5 215.0,72.1 233.0,70.3 250.4,65.9 268.0,72.5 286.7,72.1 304.3,76.5 322.0,72.1 340.5,72.1 358.8,74.7 376.8,65.9 394.4,68.6 412.0,68.6 429.6,70.8 448.2,72.5 465.8,74.7 484.5,70.3 502.0,74.7 520.0,65.9 538.4,72.5 556.7,64.2 574.3,60.0 593.0,60.0 610.5,62.6 628.5,62.6 646.1,58.2 664.4,62.6 682.6,62.6 700.6,64.8 718.7,66.6 736.9,65.9 754.5,74.7 772.7,76.9 790.7,74.3 808.8,78.7 826.4,78.7 844.6,82.6 862.2,84.6 880.4,82.4 898.4,84.6 916.5,90.5 934.3,88.4 952.7,92.7 970.5,90.1 988.5,92.7 1006.6,90.1 1024.4,100.7 1042.4,100.7 1060.4,92.3 1078.7,100.7 1094.0,98.9" fill="none" stroke="#1c1ce0" stroke-width="2.3" stroke-linejoin="round"/></svg>
<div class="a" style="left:1590px;top:1208px;width:1094px;height:18px;background:#fbfbfb"></div>
<div class="a" style="left:1590px;top:1226px;width:1094px;height:278px;background:#fff;border-top:2px solid #000;border-bottom:2px solid #000"></div>
<div class="a" style="left:1966px;top:1228px;width:342px;height:274px;background:#ffffcc"></div>
<div class="a" style="left:1590px;top:1282px;width:1094px;height:2px;background:repeating-linear-gradient(90deg,#c3c3c3 0 40px,transparent 40px 56px)"></div>
<div class="a" style="left:1590px;top:1326px;width:1094px;height:2px;background:#c3c3c3"></div>
<div class="a" style="left:1590px;top:1370px;width:1094px;height:2px;background:repeating-linear-gradient(90deg,#c3c3c3 0 40px,transparent 40px 56px)"></div>
<div class="a" style="left:1590px;top:1414px;width:1094px;height:2px;background:#c3c3c3"></div>
<div class="a" style="left:1590px;top:1458px;width:1094px;height:2px;background:repeating-linear-gradient(90deg,#c3c3c3 0 40px,transparent 40px 56px)"></div>
<div class="lab" style="left:1630.5px;top:1283px">2.5</div>
<div class="lab" style="left:1630.5px;top:1327px">2.0</div>
<div class="lab" style="left:1630.5px;top:1371px">1.5</div>
<div class="lab" style="left:1630.5px;top:1415px">1.0</div>
<div class="lab" style="left:1630.5px;top:1459px">0.5</div>
<div class="a" style="left:1965px;top:1228px;width:2px;height:274px;background:#8a8a80"></div>
<div class="a" style="left:2307px;top:1228px;width:2px;height:274px;background:#8a8a80"></div>
<svg class="a" style="left:1590px;top:1440px" width="1094" height="40"><polyline points="0.0,23.0 18.0,20.5 36.0,20.5 54.0,18.5 72.0,16.5 90.0,14.0 108.0,18.0 126.0,18.0 144.0,22.0 161.0,24.5 179.0,23.0 197.0,21.0 215.0,20.0 233.0,20.5 250.4,18.5 269.1,18.2 287.0,17.8 305.0,17.6 323.0,20.7 340.9,23.4 358.8,24.3 376.8,25.8 394.8,24.0 412.7,22.7 430.6,22.6 448.6,22.7 466.6,23.1 484.5,23.4 502.4,23.8 520.4,23.8 538.3,23.8 556.3,24.0 574.2,21.9 592.2,21.4 610.2,19.0 628.1,18.7 646.1,20.4 664.0,19.0 681.9,16.9 699.9,18.2 717.8,18.3 735.8,18.5 753.8,20.0 771.7,18.9 789.7,18.7 807.6,19.0 825.6,19.0 843.5,19.3 862.2,20.7 880.4,22.9 898.4,24.6 916.5,24.6 934.3,24.6 952.7,24.6 970.5,22.2 988.5,22.2 1006.6,24.6 1024.4,22.2 1042.4,22.2 1060.4,20.0 1078.7,20.0 1094.0,20.0" fill="none" stroke="#1c1ce0" stroke-width="2.3" stroke-linejoin="round"/></svg>
<div class="a" style="left:1590px;top:1504px;width:1094px;height:28px;background:#fafafa"></div>
<div class="a" style="left:1911px;top:1512px;width:36px;height:16px;border-radius:8px;background:#8e8e8e"></div>
</body></html>
